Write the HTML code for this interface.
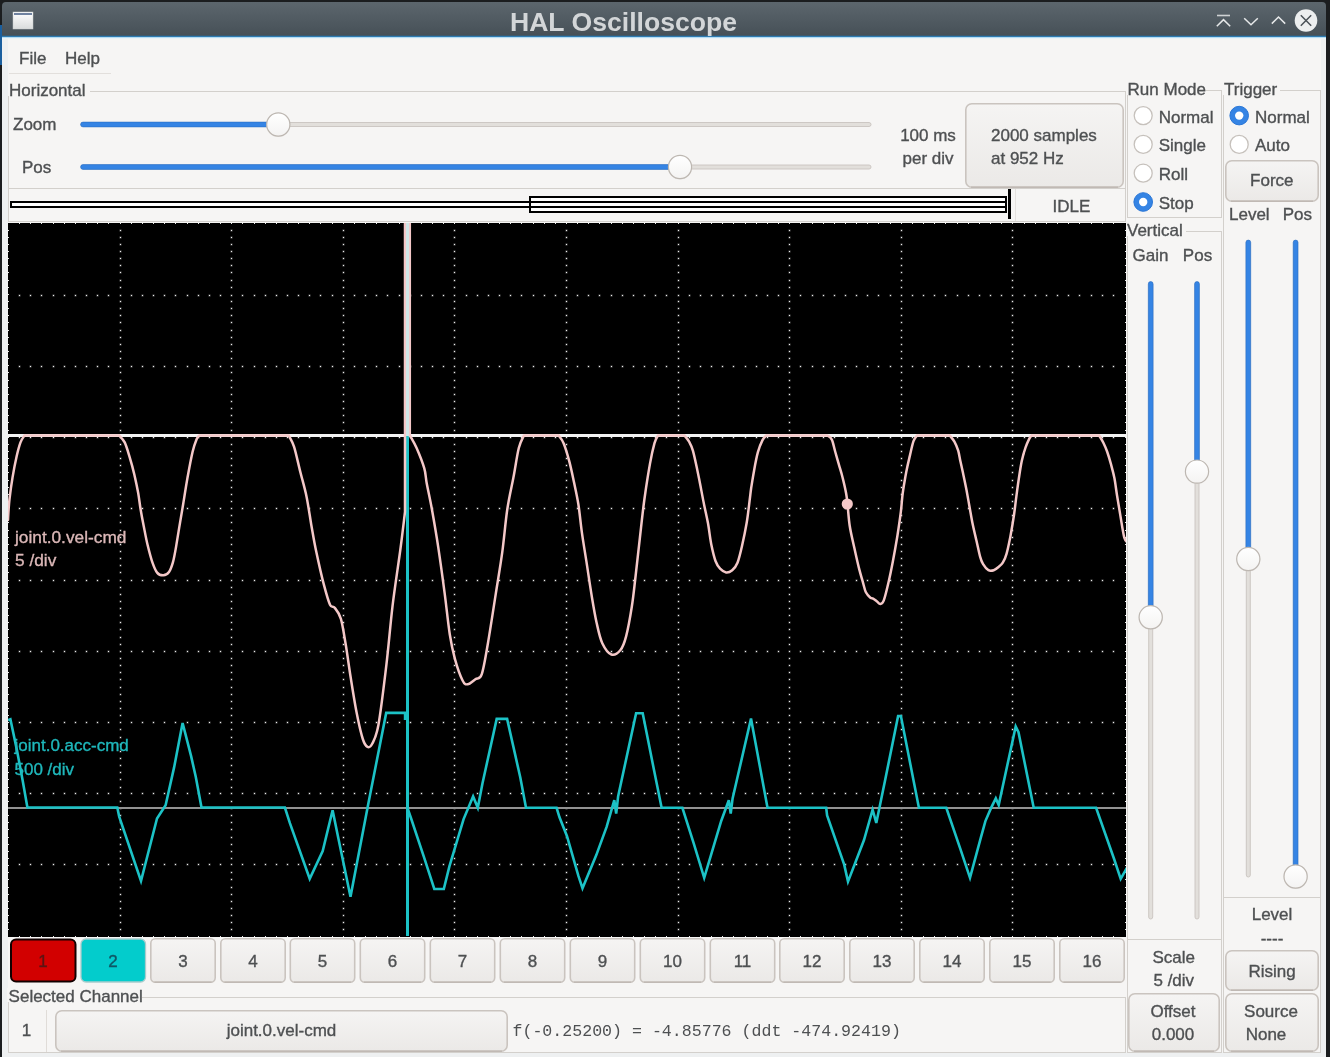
<!DOCTYPE html><html><head><meta charset="utf-8"><style>html,body{margin:0;padding:0;background:#1b1d1f;overflow:hidden}svg{display:block;will-change:transform}</style></head><body>
<svg width="1330" height="1057" viewBox="0 0 1330 1057">
<defs>
<linearGradient id="tb" x1="0" y1="0" x2="0" y2="1"><stop offset="0" stop-color="#5c666d"/><stop offset="1" stop-color="#465057"/></linearGradient>
<linearGradient id="btn" x1="0" y1="0" x2="0" y2="1"><stop offset="0" stop-color="#f5f4f3"/><stop offset="1" stop-color="#ebe9e7"/></linearGradient>
<linearGradient id="thumb" x1="0" y1="0" x2="0" y2="1"><stop offset="0" stop-color="#ffffff"/><stop offset="1" stop-color="#f4f3f2"/></linearGradient>
<linearGradient id="ico" x1="0" y1="0" x2="0" y2="1"><stop offset="0" stop-color="#ffffff"/><stop offset="1" stop-color="#d9dcdc"/></linearGradient>
</defs>
<rect x="0" y="0" width="1330" height="1057" fill="#1b1d1f" />
<rect x="0" y="25" width="2" height="40" fill="#1a5f9f" />
<rect x="2" y="36" width="1324" height="1021" fill="#eef0f1" />
<rect x="8" y="38" width="1313" height="1014" fill="#f6f5f4" />
<path d="M2 36 V6 Q2 2 6 2 H1322 Q1326 2 1326 6 V36 Z" fill="url(#tb)"/>
<rect x="2" y="35" width="1324" height="1" fill="#3d5a6e" />
<rect x="2" y="36" width="1324" height="1" fill="#2f7cb2" />
<rect x="2" y="37" width="1324" height="1" fill="#b5dcf3" />
<rect x="2" y="38" width="1324" height="1" fill="#e9f4f9" />
<rect x="13" y="12" width="20" height="17" fill="url(#ico)" stroke="#c8cccc" stroke-width="0.5"/>
<rect x="14" y="13" width="18" height="2" fill="#6f82a0" />
<text x="623.5" y="30.5" font-size="26.6" fill="#d3d6d8"  text-anchor="middle" font-weight="bold" font-family='"Liberation Sans", sans-serif' >HAL Oscilloscope</text>
<path d="M1217 15.5 H1230" stroke="#cfd2d4" stroke-width="1.6"/>
<path d="M1216.8 26.3 L1223.5 19.6 L1230.2 26.3" stroke="#e6e8e9" stroke-width="1.5" fill="none"/>
<path d="M1244.2 18.2 L1251 24.8 L1257.8 18.2" stroke="#e6e8e9" stroke-width="1.5" fill="none"/>
<path d="M1271.8 23.6 L1278.5 17 L1285.2 23.6" stroke="#e6e8e9" stroke-width="1.5" fill="none"/>
<circle cx="1306" cy="20.5" r="11.3" fill="#eceeef"/>
<path d="M1300.8 15.3 L1311.2 25.7 M1311.2 15.3 L1300.8 25.7" stroke="#4a5157" stroke-width="1.5"/>
<text x="19" y="64" font-size="17" fill="#4e5052" stroke="#4e5052" stroke-width="0.35" text-anchor="start" font-weight="normal" font-family='"Liberation Sans", sans-serif' >File</text>
<text x="65" y="64" font-size="17" fill="#4e5052" stroke="#4e5052" stroke-width="0.35" text-anchor="start" font-weight="normal" font-family='"Liberation Sans", sans-serif' >Help</text>
<rect x="9" y="73" width="102" height="1" fill="#e2dfdc" />
<rect x="8" y="91" width="1118" height="1" fill="#d3d0cc" />
<rect x="8" y="221" width="1118" height="1" fill="#d3d0cc" />
<rect x="8" y="91" width="1" height="131" fill="#d3d0cc" />
<rect x="1125" y="91" width="1" height="131" fill="#d3d0cc" />
<rect x="8" y="82" width="82" height="14" fill="#f6f5f4" />
<text x="9" y="96" font-size="17" fill="#4e5052" stroke="#4e5052" stroke-width="0.35" text-anchor="start" font-weight="normal" font-family='"Liberation Sans", sans-serif' >Horizontal</text>
<text x="13" y="130.3" font-size="17" fill="#4e5052" stroke="#4e5052" stroke-width="0.35" text-anchor="start" font-weight="normal" font-family='"Liberation Sans", sans-serif' >Zoom</text>
<text x="22" y="172.5" font-size="17" fill="#4e5052" stroke="#4e5052" stroke-width="0.35" text-anchor="start" font-weight="normal" font-family='"Liberation Sans", sans-serif' >Pos</text>
<rect x="81" y="122.5" width="790" height="4" rx="2" fill="#e2dfdb" stroke="#c9c4bf" stroke-width="0.9"/>
<rect x="80.6" y="122.1" width="197.3" height="4.8" rx="2.4" fill="#3584e4" stroke="#2a6fc4" stroke-width="0.6"/>
<circle cx="278.3" cy="124.9" r="12" fill="#d8d4d0" opacity="0.5"/>
<circle cx="278.3" cy="124.5" r="11.6" fill="url(#thumb)" stroke="#bdb7b1" stroke-width="1.2"/>
<rect x="81" y="165" width="790" height="4" rx="2" fill="#e2dfdb" stroke="#c9c4bf" stroke-width="0.9"/>
<rect x="80.6" y="164.6" width="599" height="4.8" rx="2.4" fill="#3584e4" stroke="#2a6fc4" stroke-width="0.6"/>
<circle cx="680" cy="167.4" r="12" fill="#d8d4d0" opacity="0.5"/>
<circle cx="680" cy="167" r="11.6" fill="url(#thumb)" stroke="#bdb7b1" stroke-width="1.2"/>
<text x="928" y="141" font-size="17" fill="#4e5052" stroke="#4e5052" stroke-width="0.35" text-anchor="middle" font-weight="normal" font-family='"Liberation Sans", sans-serif' >100 ms</text>
<text x="928" y="164" font-size="17" fill="#4e5052" stroke="#4e5052" stroke-width="0.35" text-anchor="middle" font-weight="normal" font-family='"Liberation Sans", sans-serif' >per div</text>
<rect x="965.8" y="103.8" width="157.4" height="83.4" rx="6" fill="url(#btn)" stroke="#cac4bf" stroke-width="1.6"/>
<path d="M971 187.1 H1118" stroke="#bdb6b0" stroke-width="1.4"/>
<text x="991" y="141" font-size="17" fill="#4e5052" stroke="#4e5052" stroke-width="0.35" text-anchor="start" font-weight="normal" font-family='"Liberation Sans", sans-serif' >2000 samples</text>
<text x="991" y="164" font-size="17" fill="#4e5052" stroke="#4e5052" stroke-width="0.35" text-anchor="start" font-weight="normal" font-family='"Liberation Sans", sans-serif' >at 952 Hz</text>
<rect x="9" y="188" width="1116" height="1" fill="#d3d0cc" />
<rect x="1015" y="189" width="1" height="32" fill="#e4e1de" />
<text x="1071.5" y="211.6" font-size="17" fill="#4e5052" stroke="#4e5052" stroke-width="0.35" text-anchor="middle" font-weight="normal" font-family='"Liberation Sans", sans-serif' >IDLE</text>
<rect x="12" y="203" width="517" height="3" fill="#ffffff" />
<rect x="531" y="198" width="474" height="13" fill="#ffffff" />
<rect x="10" y="201" width="519" height="2" fill="#000000" />
<rect x="10" y="206" width="519" height="2" fill="#000000" />
<rect x="10" y="201" width="2" height="7" fill="#000000" />
<rect x="529" y="196" width="478" height="2" fill="#000000" />
<rect x="529" y="201" width="478" height="2" fill="#000000" />
<rect x="529" y="206" width="478" height="2" fill="#000000" />
<rect x="529" y="211" width="478" height="2" fill="#000000" />
<rect x="529" y="196" width="2" height="17" fill="#000000" />
<rect x="1005" y="196" width="2" height="17" fill="#000000" />
<rect x="1008" y="189" width="3" height="30" fill="#000000" />
<rect x="1127" y="90" width="95" height="1" fill="#d3d0cc" />
<rect x="1127" y="217" width="95" height="1" fill="#d3d0cc" />
<rect x="1127" y="90" width="1" height="128" fill="#d3d0cc" />
<rect x="1221" y="90" width="1" height="128" fill="#d3d0cc" />
<rect x="1126" y="80" width="80" height="15" fill="#f6f5f4" />
<text x="1127.6" y="95.2" font-size="17" fill="#4e5052" stroke="#4e5052" stroke-width="0.35" text-anchor="start" font-weight="normal" font-family='"Liberation Sans", sans-serif' >Run Mode</text>
<circle cx="1143.2" cy="115.6" r="9.0" fill="#ffffff" stroke="#c6c1bc" stroke-width="1.3"/>
<text x="1158.7" y="122.5" font-size="17" fill="#4e5052" stroke="#4e5052" stroke-width="0.35" text-anchor="start" font-weight="normal" font-family='"Liberation Sans", sans-serif' >Normal</text>
<circle cx="1143.2" cy="144.4" r="9.0" fill="#ffffff" stroke="#c6c1bc" stroke-width="1.3"/>
<text x="1158.7" y="151.3" font-size="17" fill="#4e5052" stroke="#4e5052" stroke-width="0.35" text-anchor="start" font-weight="normal" font-family='"Liberation Sans", sans-serif' >Single</text>
<circle cx="1143.2" cy="173.2" r="9.0" fill="#ffffff" stroke="#c6c1bc" stroke-width="1.3"/>
<text x="1158.7" y="180.1" font-size="17" fill="#4e5052" stroke="#4e5052" stroke-width="0.35" text-anchor="start" font-weight="normal" font-family='"Liberation Sans", sans-serif' >Roll</text>
<circle cx="1143.2" cy="202.0" r="9.3" fill="#3584e4" stroke="#2a76d6" stroke-width="1"/>
<circle cx="1143.2" cy="202.0" r="4.2" fill="#ffffff"/>
<text x="1158.7" y="208.9" font-size="17" fill="#4e5052" stroke="#4e5052" stroke-width="0.35" text-anchor="start" font-weight="normal" font-family='"Liberation Sans", sans-serif' >Stop</text>
<rect x="1223" y="90" width="98" height="1" fill="#d3d0cc" />
<rect x="1223" y="1052" width="98" height="1" fill="#d3d0cc" />
<rect x="1223" y="90" width="1" height="963" fill="#d3d0cc" />
<rect x="1320" y="90" width="1" height="963" fill="#d3d0cc" />
<rect x="1222" y="80" width="58" height="15" fill="#f6f5f4" />
<text x="1224" y="95.2" font-size="17" fill="#4e5052" stroke="#4e5052" stroke-width="0.35" text-anchor="start" font-weight="normal" font-family='"Liberation Sans", sans-serif' >Trigger</text>
<circle cx="1239.2" cy="115.6" r="9.3" fill="#3584e4" stroke="#2a76d6" stroke-width="1"/>
<circle cx="1239.2" cy="115.6" r="4.2" fill="#ffffff"/>
<text x="1255" y="122.5" font-size="17" fill="#4e5052" stroke="#4e5052" stroke-width="0.35" text-anchor="start" font-weight="normal" font-family='"Liberation Sans", sans-serif' >Normal</text>
<circle cx="1239.2" cy="144.4" r="9.0" fill="#ffffff" stroke="#c6c1bc" stroke-width="1.3"/>
<text x="1255" y="151.3" font-size="17" fill="#4e5052" stroke="#4e5052" stroke-width="0.35" text-anchor="start" font-weight="normal" font-family='"Liberation Sans", sans-serif' >Auto</text>
<rect x="1225.8" y="160.8" width="92.4" height="40.4" rx="6" fill="url(#btn)" stroke="#cac4bf" stroke-width="1.6"/>
<path d="M1231 201.1 H1313" stroke="#bdb6b0" stroke-width="1.4"/>
<text x="1271.8" y="186.4" font-size="17" fill="#4e5052" stroke="#4e5052" stroke-width="0.35" text-anchor="middle" font-weight="normal" font-family='"Liberation Sans", sans-serif' >Force</text>
<text x="1229" y="219.5" font-size="17" fill="#4e5052" stroke="#4e5052" stroke-width="0.35" text-anchor="start" font-weight="normal" font-family='"Liberation Sans", sans-serif' >Level</text>
<text x="1282.7" y="219.5" font-size="17" fill="#4e5052" stroke="#4e5052" stroke-width="0.35" text-anchor="start" font-weight="normal" font-family='"Liberation Sans", sans-serif' >Pos</text>
<rect x="1246.3" y="240.5" width="4" height="636.5" rx="2" fill="#e2dfdb" stroke="#c9c4bf" stroke-width="0.9"/>
<rect x="1245.8999999999999" y="240.1" width="4.8" height="318.5" rx="2.4" fill="#3584e4" stroke="#2a6fc4" stroke-width="0.6"/>
<circle cx="1248.3" cy="559.4" r="12" fill="#d8d4d0" opacity="0.5"/>
<circle cx="1248.3" cy="559" r="11.6" fill="url(#thumb)" stroke="#bdb7b1" stroke-width="1.2"/>
<rect x="1293.6" y="240.5" width="4" height="636.5" rx="2" fill="#e2dfdb" stroke="#c9c4bf" stroke-width="0.9"/>
<rect x="1293.1999999999998" y="240.1" width="4.8" height="636.0" rx="2.4" fill="#3584e4" stroke="#2a6fc4" stroke-width="0.6"/>
<circle cx="1295.6" cy="876.9" r="12" fill="#d8d4d0" opacity="0.5"/>
<circle cx="1295.6" cy="876.5" r="11.6" fill="url(#thumb)" stroke="#bdb7b1" stroke-width="1.2"/>
<rect x="1224" y="897" width="96" height="1" fill="#d3d0cc" />
<text x="1272" y="920" font-size="17" fill="#4e5052" stroke="#4e5052" stroke-width="0.35" text-anchor="middle" font-weight="normal" font-family='"Liberation Sans", sans-serif' >Level</text>
<text x="1272" y="944" font-size="17" fill="#4e5052" stroke="#4e5052" stroke-width="0.35" text-anchor="middle" font-weight="normal" font-family='"Liberation Sans", sans-serif' >----</text>
<rect x="1225.8" y="950.8" width="92.4" height="39.4" rx="6" fill="url(#btn)" stroke="#cac4bf" stroke-width="1.6"/>
<path d="M1231 990.1 H1313" stroke="#bdb6b0" stroke-width="1.4"/>
<text x="1272" y="976.5" font-size="17" fill="#4e5052" stroke="#4e5052" stroke-width="0.35" text-anchor="middle" font-weight="normal" font-family='"Liberation Sans", sans-serif' >Rising</text>
<rect x="1225.8" y="993.8" width="92.4" height="57.4" rx="6" fill="url(#btn)" stroke="#cac4bf" stroke-width="1.6"/>
<path d="M1231 1051.1 H1313" stroke="#bdb6b0" stroke-width="1.4"/>
<text x="1271" y="1016.5" font-size="17" fill="#4e5052" stroke="#4e5052" stroke-width="0.35" text-anchor="middle" font-weight="normal" font-family='"Liberation Sans", sans-serif' >Source</text>
<text x="1266" y="1039.5" font-size="17" fill="#4e5052" stroke="#4e5052" stroke-width="0.35" text-anchor="middle" font-weight="normal" font-family='"Liberation Sans", sans-serif' >None</text>
<rect x="1127" y="231" width="95" height="1" fill="#d3d0cc" />
<rect x="1127" y="1052" width="95" height="1" fill="#d3d0cc" />
<rect x="1127" y="231" width="1" height="822" fill="#d3d0cc" />
<rect x="1221" y="231" width="1" height="822" fill="#d3d0cc" />
<rect x="1126" y="221" width="60" height="15" fill="#f6f5f4" />
<text x="1127" y="236" font-size="17" fill="#4e5052" stroke="#4e5052" stroke-width="0.35" text-anchor="start" font-weight="normal" font-family='"Liberation Sans", sans-serif' >Vertical</text>
<text x="1150.5" y="261.2" font-size="17" fill="#4e5052" stroke="#4e5052" stroke-width="0.35" text-anchor="middle" font-weight="normal" font-family='"Liberation Sans", sans-serif' >Gain</text>
<text x="1197.5" y="261.2" font-size="17" fill="#4e5052" stroke="#4e5052" stroke-width="0.35" text-anchor="middle" font-weight="normal" font-family='"Liberation Sans", sans-serif' >Pos</text>
<rect x="1148.7" y="282" width="4" height="637" rx="2" fill="#e2dfdb" stroke="#c9c4bf" stroke-width="0.9"/>
<rect x="1148.3" y="281.6" width="4.8" height="335.29999999999995" rx="2.4" fill="#3584e4" stroke="#2a6fc4" stroke-width="0.6"/>
<circle cx="1150.7" cy="617.6999999999999" r="12" fill="#d8d4d0" opacity="0.5"/>
<circle cx="1150.7" cy="617.3" r="11.6" fill="url(#thumb)" stroke="#bdb7b1" stroke-width="1.2"/>
<rect x="1195" y="282" width="4" height="637" rx="2" fill="#e2dfdb" stroke="#c9c4bf" stroke-width="0.9"/>
<rect x="1194.6" y="281.6" width="4.8" height="189.60000000000002" rx="2.4" fill="#3584e4" stroke="#2a6fc4" stroke-width="0.6"/>
<circle cx="1197" cy="472.0" r="12" fill="#d8d4d0" opacity="0.5"/>
<circle cx="1197" cy="471.6" r="11.6" fill="url(#thumb)" stroke="#bdb7b1" stroke-width="1.2"/>
<rect x="1128" y="939" width="93" height="1" fill="#d3d0cc" />
<text x="1173.8" y="962.8" font-size="17" fill="#4e5052" stroke="#4e5052" stroke-width="0.35" text-anchor="middle" font-weight="normal" font-family='"Liberation Sans", sans-serif' >Scale</text>
<text x="1173.8" y="986" font-size="17" fill="#4e5052" stroke="#4e5052" stroke-width="0.35" text-anchor="middle" font-weight="normal" font-family='"Liberation Sans", sans-serif' >5 /div</text>
<rect x="1128.8" y="993.8" width="90.4" height="57.4" rx="6" fill="url(#btn)" stroke="#cac4bf" stroke-width="1.6"/>
<path d="M1134 1051.1 H1214" stroke="#bdb6b0" stroke-width="1.4"/>
<text x="1173" y="1016.5" font-size="17" fill="#4e5052" stroke="#4e5052" stroke-width="0.35" text-anchor="middle" font-weight="normal" font-family='"Liberation Sans", sans-serif' >Offset</text>
<text x="1173" y="1039.5" font-size="17" fill="#4e5052" stroke="#4e5052" stroke-width="0.35" text-anchor="middle" font-weight="normal" font-family='"Liberation Sans", sans-serif' >0.000</text>
<rect x="11.0" y="939.5" width="64.5" height="42" rx="5" fill="#d20000" stroke="#120000" stroke-width="2"/>
<text x="43.0" y="967" font-size="17" fill="#5c1414" stroke="#5c1414" stroke-width="0.35" text-anchor="middle" font-weight="normal" font-family='"Liberation Sans", sans-serif' >1</text>
<rect x="81.0" y="939" width="64.5" height="43" rx="5" fill="#03cccc" stroke="#a8cccc" stroke-width="1.3"/>
<text x="113.0" y="967" font-size="17" fill="#0f5865" stroke="#0f5865" stroke-width="0.35" text-anchor="middle" font-weight="normal" font-family='"Liberation Sans", sans-serif' >2</text>
<rect x="150.8" y="938.8" width="64.4" height="43.4" rx="4.5" fill="url(#btn)" stroke="#cac4bf" stroke-width="1.6"/>
<path d="M154.5 982.1 H211.5" stroke="#bdb6b0" stroke-width="1.4"/>
<text x="183.0" y="967" font-size="17" fill="#4e5052" stroke="#4e5052" stroke-width="0.35" text-anchor="middle" font-weight="normal" font-family='"Liberation Sans", sans-serif' >3</text>
<rect x="220.8" y="938.8" width="64.4" height="43.4" rx="4.5" fill="url(#btn)" stroke="#cac4bf" stroke-width="1.6"/>
<path d="M224.5 982.1 H281.5" stroke="#bdb6b0" stroke-width="1.4"/>
<text x="253.0" y="967" font-size="17" fill="#4e5052" stroke="#4e5052" stroke-width="0.35" text-anchor="middle" font-weight="normal" font-family='"Liberation Sans", sans-serif' >4</text>
<rect x="290.3" y="938.8" width="64.4" height="43.4" rx="4.5" fill="url(#btn)" stroke="#cac4bf" stroke-width="1.6"/>
<path d="M294.0 982.1 H351.0" stroke="#bdb6b0" stroke-width="1.4"/>
<text x="322.5" y="967" font-size="17" fill="#4e5052" stroke="#4e5052" stroke-width="0.35" text-anchor="middle" font-weight="normal" font-family='"Liberation Sans", sans-serif' >5</text>
<rect x="360.3" y="938.8" width="64.4" height="43.4" rx="4.5" fill="url(#btn)" stroke="#cac4bf" stroke-width="1.6"/>
<path d="M364.0 982.1 H421.0" stroke="#bdb6b0" stroke-width="1.4"/>
<text x="392.5" y="967" font-size="17" fill="#4e5052" stroke="#4e5052" stroke-width="0.35" text-anchor="middle" font-weight="normal" font-family='"Liberation Sans", sans-serif' >6</text>
<rect x="430.3" y="938.8" width="64.4" height="43.4" rx="4.5" fill="url(#btn)" stroke="#cac4bf" stroke-width="1.6"/>
<path d="M434.0 982.1 H491.0" stroke="#bdb6b0" stroke-width="1.4"/>
<text x="462.5" y="967" font-size="17" fill="#4e5052" stroke="#4e5052" stroke-width="0.35" text-anchor="middle" font-weight="normal" font-family='"Liberation Sans", sans-serif' >7</text>
<rect x="500.3" y="938.8" width="64.4" height="43.4" rx="4.5" fill="url(#btn)" stroke="#cac4bf" stroke-width="1.6"/>
<path d="M504.0 982.1 H561.0" stroke="#bdb6b0" stroke-width="1.4"/>
<text x="532.5" y="967" font-size="17" fill="#4e5052" stroke="#4e5052" stroke-width="0.35" text-anchor="middle" font-weight="normal" font-family='"Liberation Sans", sans-serif' >8</text>
<rect x="570.3" y="938.8" width="64.4" height="43.4" rx="4.5" fill="url(#btn)" stroke="#cac4bf" stroke-width="1.6"/>
<path d="M574.0 982.1 H631.0" stroke="#bdb6b0" stroke-width="1.4"/>
<text x="602.5" y="967" font-size="17" fill="#4e5052" stroke="#4e5052" stroke-width="0.35" text-anchor="middle" font-weight="normal" font-family='"Liberation Sans", sans-serif' >9</text>
<rect x="640.3" y="938.8" width="64.4" height="43.4" rx="4.5" fill="url(#btn)" stroke="#cac4bf" stroke-width="1.6"/>
<path d="M644.0 982.1 H701.0" stroke="#bdb6b0" stroke-width="1.4"/>
<text x="672.5" y="967" font-size="17" fill="#4e5052" stroke="#4e5052" stroke-width="0.35" text-anchor="middle" font-weight="normal" font-family='"Liberation Sans", sans-serif' >10</text>
<rect x="710.3" y="938.8" width="64.4" height="43.4" rx="4.5" fill="url(#btn)" stroke="#cac4bf" stroke-width="1.6"/>
<path d="M714.0 982.1 H771.0" stroke="#bdb6b0" stroke-width="1.4"/>
<text x="742.5" y="967" font-size="17" fill="#4e5052" stroke="#4e5052" stroke-width="0.35" text-anchor="middle" font-weight="normal" font-family='"Liberation Sans", sans-serif' >11</text>
<rect x="779.8" y="938.8" width="64.4" height="43.4" rx="4.5" fill="url(#btn)" stroke="#cac4bf" stroke-width="1.6"/>
<path d="M783.5 982.1 H840.5" stroke="#bdb6b0" stroke-width="1.4"/>
<text x="812.0" y="967" font-size="17" fill="#4e5052" stroke="#4e5052" stroke-width="0.35" text-anchor="middle" font-weight="normal" font-family='"Liberation Sans", sans-serif' >12</text>
<rect x="849.8" y="938.8" width="64.4" height="43.4" rx="4.5" fill="url(#btn)" stroke="#cac4bf" stroke-width="1.6"/>
<path d="M853.5 982.1 H910.5" stroke="#bdb6b0" stroke-width="1.4"/>
<text x="882.0" y="967" font-size="17" fill="#4e5052" stroke="#4e5052" stroke-width="0.35" text-anchor="middle" font-weight="normal" font-family='"Liberation Sans", sans-serif' >13</text>
<rect x="919.8" y="938.8" width="64.4" height="43.4" rx="4.5" fill="url(#btn)" stroke="#cac4bf" stroke-width="1.6"/>
<path d="M923.5 982.1 H980.5" stroke="#bdb6b0" stroke-width="1.4"/>
<text x="952.0" y="967" font-size="17" fill="#4e5052" stroke="#4e5052" stroke-width="0.35" text-anchor="middle" font-weight="normal" font-family='"Liberation Sans", sans-serif' >14</text>
<rect x="989.8" y="938.8" width="64.4" height="43.4" rx="4.5" fill="url(#btn)" stroke="#cac4bf" stroke-width="1.6"/>
<path d="M993.5 982.1 H1050.5" stroke="#bdb6b0" stroke-width="1.4"/>
<text x="1022.0" y="967" font-size="17" fill="#4e5052" stroke="#4e5052" stroke-width="0.35" text-anchor="middle" font-weight="normal" font-family='"Liberation Sans", sans-serif' >15</text>
<rect x="1059.8" y="938.8" width="64.4" height="43.4" rx="4.5" fill="url(#btn)" stroke="#cac4bf" stroke-width="1.6"/>
<path d="M1063.5 982.1 H1120.5" stroke="#bdb6b0" stroke-width="1.4"/>
<text x="1092.0" y="967" font-size="17" fill="#4e5052" stroke="#4e5052" stroke-width="0.35" text-anchor="middle" font-weight="normal" font-family='"Liberation Sans", sans-serif' >16</text>
<rect x="8" y="997" width="1118" height="1" fill="#d3d0cc" />
<rect x="8" y="1052" width="1118" height="1" fill="#d3d0cc" />
<rect x="8" y="997" width="1" height="56" fill="#d3d0cc" />
<rect x="1125" y="997" width="1" height="56" fill="#d3d0cc" />
<rect x="7" y="988" width="135" height="14" fill="#f6f5f4" />
<text x="8.6" y="1002.3" font-size="17" fill="#4e5052" stroke="#4e5052" stroke-width="0.35" text-anchor="start" font-weight="normal" font-family='"Liberation Sans", sans-serif' >Selected Channel</text>
<text x="26.6" y="1036" font-size="17" fill="#4e5052" stroke="#4e5052" stroke-width="0.35" text-anchor="middle" font-weight="normal" font-family='"Liberation Sans", sans-serif' >1</text>
<rect x="46" y="1010" width="1" height="42" fill="#e0dcd8" />
<rect x="55.8" y="1010.8" width="451.4" height="40.4" rx="6" fill="url(#btn)" stroke="#cac4bf" stroke-width="1.6"/>
<path d="M61 1051.1 H502" stroke="#bdb6b0" stroke-width="1.4"/>
<text x="281.5" y="1036" font-size="17" fill="#4e5052" stroke="#4e5052" stroke-width="0.35" text-anchor="middle" font-weight="normal" font-family='"Liberation Sans", sans-serif' >joint.0.vel-cmd</text>
<text x="512.5" y="1036" font-size="16.6" fill="#4e5052"  text-anchor="start" font-weight="normal" font-family='"Liberation Mono", monospace' >f(-0.25200) = -4.85776 (ddt -474.92419)</text>
<rect x="8" y="223" width="1118" height="714" fill="#000000" />
<path d="M18.5 294.5h2v2h-2zM29.5 294.5h2v2h-2zM40.5 294.5h2v2h-2zM52.5 294.5h2v2h-2zM63.5 294.5h2v2h-2zM74.5 294.5h2v2h-2zM85.5 294.5h2v2h-2zM96.5 294.5h2v2h-2zM107.5 294.5h2v2h-2zM119.5 294.5h2v2h-2zM130.5 294.5h2v2h-2zM141.5 294.5h2v2h-2zM152.5 294.5h2v2h-2zM163.5 294.5h2v2h-2zM174.5 294.5h2v2h-2zM186.5 294.5h2v2h-2zM197.5 294.5h2v2h-2zM208.5 294.5h2v2h-2zM219.5 294.5h2v2h-2zM230.5 294.5h2v2h-2zM241.5 294.5h2v2h-2zM253.5 294.5h2v2h-2zM264.5 294.5h2v2h-2zM275.5 294.5h2v2h-2zM286.5 294.5h2v2h-2zM297.5 294.5h2v2h-2zM308.5 294.5h2v2h-2zM319.5 294.5h2v2h-2zM331.5 294.5h2v2h-2zM342.5 294.5h2v2h-2zM353.5 294.5h2v2h-2zM364.5 294.5h2v2h-2zM375.5 294.5h2v2h-2zM386.5 294.5h2v2h-2zM398.5 294.5h2v2h-2zM409.5 294.5h2v2h-2zM420.5 294.5h2v2h-2zM431.5 294.5h2v2h-2zM442.5 294.5h2v2h-2zM453.5 294.5h2v2h-2zM465.5 294.5h2v2h-2zM476.5 294.5h2v2h-2zM487.5 294.5h2v2h-2zM498.5 294.5h2v2h-2zM509.5 294.5h2v2h-2zM520.5 294.5h2v2h-2zM532.5 294.5h2v2h-2zM543.5 294.5h2v2h-2zM554.5 294.5h2v2h-2zM565.5 294.5h2v2h-2zM576.5 294.5h2v2h-2zM587.5 294.5h2v2h-2zM598.5 294.5h2v2h-2zM610.5 294.5h2v2h-2zM621.5 294.5h2v2h-2zM632.5 294.5h2v2h-2zM643.5 294.5h2v2h-2zM654.5 294.5h2v2h-2zM665.5 294.5h2v2h-2zM677.5 294.5h2v2h-2zM688.5 294.5h2v2h-2zM699.5 294.5h2v2h-2zM710.5 294.5h2v2h-2zM721.5 294.5h2v2h-2zM732.5 294.5h2v2h-2zM744.5 294.5h2v2h-2zM755.5 294.5h2v2h-2zM766.5 294.5h2v2h-2zM777.5 294.5h2v2h-2zM788.5 294.5h2v2h-2zM799.5 294.5h2v2h-2zM811.5 294.5h2v2h-2zM822.5 294.5h2v2h-2zM833.5 294.5h2v2h-2zM844.5 294.5h2v2h-2zM855.5 294.5h2v2h-2zM866.5 294.5h2v2h-2zM877.5 294.5h2v2h-2zM889.5 294.5h2v2h-2zM900.5 294.5h2v2h-2zM911.5 294.5h2v2h-2zM922.5 294.5h2v2h-2zM933.5 294.5h2v2h-2zM944.5 294.5h2v2h-2zM956.5 294.5h2v2h-2zM967.5 294.5h2v2h-2zM978.5 294.5h2v2h-2zM989.5 294.5h2v2h-2zM1000.5 294.5h2v2h-2zM1011.5 294.5h2v2h-2zM1023.5 294.5h2v2h-2zM1034.5 294.5h2v2h-2zM1045.5 294.5h2v2h-2zM1056.5 294.5h2v2h-2zM1067.5 294.5h2v2h-2zM1078.5 294.5h2v2h-2zM1090.5 294.5h2v2h-2zM1101.5 294.5h2v2h-2zM1112.5 294.5h2v2h-2zM18.5 365.5h2v2h-2zM29.5 365.5h2v2h-2zM40.5 365.5h2v2h-2zM52.5 365.5h2v2h-2zM63.5 365.5h2v2h-2zM74.5 365.5h2v2h-2zM85.5 365.5h2v2h-2zM96.5 365.5h2v2h-2zM107.5 365.5h2v2h-2zM119.5 365.5h2v2h-2zM130.5 365.5h2v2h-2zM141.5 365.5h2v2h-2zM152.5 365.5h2v2h-2zM163.5 365.5h2v2h-2zM174.5 365.5h2v2h-2zM186.5 365.5h2v2h-2zM197.5 365.5h2v2h-2zM208.5 365.5h2v2h-2zM219.5 365.5h2v2h-2zM230.5 365.5h2v2h-2zM241.5 365.5h2v2h-2zM253.5 365.5h2v2h-2zM264.5 365.5h2v2h-2zM275.5 365.5h2v2h-2zM286.5 365.5h2v2h-2zM297.5 365.5h2v2h-2zM308.5 365.5h2v2h-2zM319.5 365.5h2v2h-2zM331.5 365.5h2v2h-2zM342.5 365.5h2v2h-2zM353.5 365.5h2v2h-2zM364.5 365.5h2v2h-2zM375.5 365.5h2v2h-2zM386.5 365.5h2v2h-2zM398.5 365.5h2v2h-2zM409.5 365.5h2v2h-2zM420.5 365.5h2v2h-2zM431.5 365.5h2v2h-2zM442.5 365.5h2v2h-2zM453.5 365.5h2v2h-2zM465.5 365.5h2v2h-2zM476.5 365.5h2v2h-2zM487.5 365.5h2v2h-2zM498.5 365.5h2v2h-2zM509.5 365.5h2v2h-2zM520.5 365.5h2v2h-2zM532.5 365.5h2v2h-2zM543.5 365.5h2v2h-2zM554.5 365.5h2v2h-2zM565.5 365.5h2v2h-2zM576.5 365.5h2v2h-2zM587.5 365.5h2v2h-2zM598.5 365.5h2v2h-2zM610.5 365.5h2v2h-2zM621.5 365.5h2v2h-2zM632.5 365.5h2v2h-2zM643.5 365.5h2v2h-2zM654.5 365.5h2v2h-2zM665.5 365.5h2v2h-2zM677.5 365.5h2v2h-2zM688.5 365.5h2v2h-2zM699.5 365.5h2v2h-2zM710.5 365.5h2v2h-2zM721.5 365.5h2v2h-2zM732.5 365.5h2v2h-2zM744.5 365.5h2v2h-2zM755.5 365.5h2v2h-2zM766.5 365.5h2v2h-2zM777.5 365.5h2v2h-2zM788.5 365.5h2v2h-2zM799.5 365.5h2v2h-2zM811.5 365.5h2v2h-2zM822.5 365.5h2v2h-2zM833.5 365.5h2v2h-2zM844.5 365.5h2v2h-2zM855.5 365.5h2v2h-2zM866.5 365.5h2v2h-2zM877.5 365.5h2v2h-2zM889.5 365.5h2v2h-2zM900.5 365.5h2v2h-2zM911.5 365.5h2v2h-2zM922.5 365.5h2v2h-2zM933.5 365.5h2v2h-2zM944.5 365.5h2v2h-2zM956.5 365.5h2v2h-2zM967.5 365.5h2v2h-2zM978.5 365.5h2v2h-2zM989.5 365.5h2v2h-2zM1000.5 365.5h2v2h-2zM1011.5 365.5h2v2h-2zM1023.5 365.5h2v2h-2zM1034.5 365.5h2v2h-2zM1045.5 365.5h2v2h-2zM1056.5 365.5h2v2h-2zM1067.5 365.5h2v2h-2zM1078.5 365.5h2v2h-2zM1090.5 365.5h2v2h-2zM1101.5 365.5h2v2h-2zM1112.5 365.5h2v2h-2zM18.5 436.5h2v2h-2zM29.5 436.5h2v2h-2zM40.5 436.5h2v2h-2zM52.5 436.5h2v2h-2zM63.5 436.5h2v2h-2zM74.5 436.5h2v2h-2zM85.5 436.5h2v2h-2zM96.5 436.5h2v2h-2zM107.5 436.5h2v2h-2zM119.5 436.5h2v2h-2zM130.5 436.5h2v2h-2zM141.5 436.5h2v2h-2zM152.5 436.5h2v2h-2zM163.5 436.5h2v2h-2zM174.5 436.5h2v2h-2zM186.5 436.5h2v2h-2zM197.5 436.5h2v2h-2zM208.5 436.5h2v2h-2zM219.5 436.5h2v2h-2zM230.5 436.5h2v2h-2zM241.5 436.5h2v2h-2zM253.5 436.5h2v2h-2zM264.5 436.5h2v2h-2zM275.5 436.5h2v2h-2zM286.5 436.5h2v2h-2zM297.5 436.5h2v2h-2zM308.5 436.5h2v2h-2zM319.5 436.5h2v2h-2zM331.5 436.5h2v2h-2zM342.5 436.5h2v2h-2zM353.5 436.5h2v2h-2zM364.5 436.5h2v2h-2zM375.5 436.5h2v2h-2zM386.5 436.5h2v2h-2zM398.5 436.5h2v2h-2zM409.5 436.5h2v2h-2zM420.5 436.5h2v2h-2zM431.5 436.5h2v2h-2zM442.5 436.5h2v2h-2zM453.5 436.5h2v2h-2zM465.5 436.5h2v2h-2zM476.5 436.5h2v2h-2zM487.5 436.5h2v2h-2zM498.5 436.5h2v2h-2zM509.5 436.5h2v2h-2zM520.5 436.5h2v2h-2zM532.5 436.5h2v2h-2zM543.5 436.5h2v2h-2zM554.5 436.5h2v2h-2zM565.5 436.5h2v2h-2zM576.5 436.5h2v2h-2zM587.5 436.5h2v2h-2zM598.5 436.5h2v2h-2zM610.5 436.5h2v2h-2zM621.5 436.5h2v2h-2zM632.5 436.5h2v2h-2zM643.5 436.5h2v2h-2zM654.5 436.5h2v2h-2zM665.5 436.5h2v2h-2zM677.5 436.5h2v2h-2zM688.5 436.5h2v2h-2zM699.5 436.5h2v2h-2zM710.5 436.5h2v2h-2zM721.5 436.5h2v2h-2zM732.5 436.5h2v2h-2zM744.5 436.5h2v2h-2zM755.5 436.5h2v2h-2zM766.5 436.5h2v2h-2zM777.5 436.5h2v2h-2zM788.5 436.5h2v2h-2zM799.5 436.5h2v2h-2zM811.5 436.5h2v2h-2zM822.5 436.5h2v2h-2zM833.5 436.5h2v2h-2zM844.5 436.5h2v2h-2zM855.5 436.5h2v2h-2zM866.5 436.5h2v2h-2zM877.5 436.5h2v2h-2zM889.5 436.5h2v2h-2zM900.5 436.5h2v2h-2zM911.5 436.5h2v2h-2zM922.5 436.5h2v2h-2zM933.5 436.5h2v2h-2zM944.5 436.5h2v2h-2zM956.5 436.5h2v2h-2zM967.5 436.5h2v2h-2zM978.5 436.5h2v2h-2zM989.5 436.5h2v2h-2zM1000.5 436.5h2v2h-2zM1011.5 436.5h2v2h-2zM1023.5 436.5h2v2h-2zM1034.5 436.5h2v2h-2zM1045.5 436.5h2v2h-2zM1056.5 436.5h2v2h-2zM1067.5 436.5h2v2h-2zM1078.5 436.5h2v2h-2zM1090.5 436.5h2v2h-2zM1101.5 436.5h2v2h-2zM1112.5 436.5h2v2h-2zM18.5 507.5h2v2h-2zM29.5 507.5h2v2h-2zM40.5 507.5h2v2h-2zM52.5 507.5h2v2h-2zM63.5 507.5h2v2h-2zM74.5 507.5h2v2h-2zM85.5 507.5h2v2h-2zM96.5 507.5h2v2h-2zM107.5 507.5h2v2h-2zM119.5 507.5h2v2h-2zM130.5 507.5h2v2h-2zM141.5 507.5h2v2h-2zM152.5 507.5h2v2h-2zM163.5 507.5h2v2h-2zM174.5 507.5h2v2h-2zM186.5 507.5h2v2h-2zM197.5 507.5h2v2h-2zM208.5 507.5h2v2h-2zM219.5 507.5h2v2h-2zM230.5 507.5h2v2h-2zM241.5 507.5h2v2h-2zM253.5 507.5h2v2h-2zM264.5 507.5h2v2h-2zM275.5 507.5h2v2h-2zM286.5 507.5h2v2h-2zM297.5 507.5h2v2h-2zM308.5 507.5h2v2h-2zM319.5 507.5h2v2h-2zM331.5 507.5h2v2h-2zM342.5 507.5h2v2h-2zM353.5 507.5h2v2h-2zM364.5 507.5h2v2h-2zM375.5 507.5h2v2h-2zM386.5 507.5h2v2h-2zM398.5 507.5h2v2h-2zM409.5 507.5h2v2h-2zM420.5 507.5h2v2h-2zM431.5 507.5h2v2h-2zM442.5 507.5h2v2h-2zM453.5 507.5h2v2h-2zM465.5 507.5h2v2h-2zM476.5 507.5h2v2h-2zM487.5 507.5h2v2h-2zM498.5 507.5h2v2h-2zM509.5 507.5h2v2h-2zM520.5 507.5h2v2h-2zM532.5 507.5h2v2h-2zM543.5 507.5h2v2h-2zM554.5 507.5h2v2h-2zM565.5 507.5h2v2h-2zM576.5 507.5h2v2h-2zM587.5 507.5h2v2h-2zM598.5 507.5h2v2h-2zM610.5 507.5h2v2h-2zM621.5 507.5h2v2h-2zM632.5 507.5h2v2h-2zM643.5 507.5h2v2h-2zM654.5 507.5h2v2h-2zM665.5 507.5h2v2h-2zM677.5 507.5h2v2h-2zM688.5 507.5h2v2h-2zM699.5 507.5h2v2h-2zM710.5 507.5h2v2h-2zM721.5 507.5h2v2h-2zM732.5 507.5h2v2h-2zM744.5 507.5h2v2h-2zM755.5 507.5h2v2h-2zM766.5 507.5h2v2h-2zM777.5 507.5h2v2h-2zM788.5 507.5h2v2h-2zM799.5 507.5h2v2h-2zM811.5 507.5h2v2h-2zM822.5 507.5h2v2h-2zM833.5 507.5h2v2h-2zM844.5 507.5h2v2h-2zM855.5 507.5h2v2h-2zM866.5 507.5h2v2h-2zM877.5 507.5h2v2h-2zM889.5 507.5h2v2h-2zM900.5 507.5h2v2h-2zM911.5 507.5h2v2h-2zM922.5 507.5h2v2h-2zM933.5 507.5h2v2h-2zM944.5 507.5h2v2h-2zM956.5 507.5h2v2h-2zM967.5 507.5h2v2h-2zM978.5 507.5h2v2h-2zM989.5 507.5h2v2h-2zM1000.5 507.5h2v2h-2zM1011.5 507.5h2v2h-2zM1023.5 507.5h2v2h-2zM1034.5 507.5h2v2h-2zM1045.5 507.5h2v2h-2zM1056.5 507.5h2v2h-2zM1067.5 507.5h2v2h-2zM1078.5 507.5h2v2h-2zM1090.5 507.5h2v2h-2zM1101.5 507.5h2v2h-2zM1112.5 507.5h2v2h-2zM18.5 579.5h2v2h-2zM29.5 579.5h2v2h-2zM40.5 579.5h2v2h-2zM52.5 579.5h2v2h-2zM63.5 579.5h2v2h-2zM74.5 579.5h2v2h-2zM85.5 579.5h2v2h-2zM96.5 579.5h2v2h-2zM107.5 579.5h2v2h-2zM119.5 579.5h2v2h-2zM130.5 579.5h2v2h-2zM141.5 579.5h2v2h-2zM152.5 579.5h2v2h-2zM163.5 579.5h2v2h-2zM174.5 579.5h2v2h-2zM186.5 579.5h2v2h-2zM197.5 579.5h2v2h-2zM208.5 579.5h2v2h-2zM219.5 579.5h2v2h-2zM230.5 579.5h2v2h-2zM241.5 579.5h2v2h-2zM253.5 579.5h2v2h-2zM264.5 579.5h2v2h-2zM275.5 579.5h2v2h-2zM286.5 579.5h2v2h-2zM297.5 579.5h2v2h-2zM308.5 579.5h2v2h-2zM319.5 579.5h2v2h-2zM331.5 579.5h2v2h-2zM342.5 579.5h2v2h-2zM353.5 579.5h2v2h-2zM364.5 579.5h2v2h-2zM375.5 579.5h2v2h-2zM386.5 579.5h2v2h-2zM398.5 579.5h2v2h-2zM409.5 579.5h2v2h-2zM420.5 579.5h2v2h-2zM431.5 579.5h2v2h-2zM442.5 579.5h2v2h-2zM453.5 579.5h2v2h-2zM465.5 579.5h2v2h-2zM476.5 579.5h2v2h-2zM487.5 579.5h2v2h-2zM498.5 579.5h2v2h-2zM509.5 579.5h2v2h-2zM520.5 579.5h2v2h-2zM532.5 579.5h2v2h-2zM543.5 579.5h2v2h-2zM554.5 579.5h2v2h-2zM565.5 579.5h2v2h-2zM576.5 579.5h2v2h-2zM587.5 579.5h2v2h-2zM598.5 579.5h2v2h-2zM610.5 579.5h2v2h-2zM621.5 579.5h2v2h-2zM632.5 579.5h2v2h-2zM643.5 579.5h2v2h-2zM654.5 579.5h2v2h-2zM665.5 579.5h2v2h-2zM677.5 579.5h2v2h-2zM688.5 579.5h2v2h-2zM699.5 579.5h2v2h-2zM710.5 579.5h2v2h-2zM721.5 579.5h2v2h-2zM732.5 579.5h2v2h-2zM744.5 579.5h2v2h-2zM755.5 579.5h2v2h-2zM766.5 579.5h2v2h-2zM777.5 579.5h2v2h-2zM788.5 579.5h2v2h-2zM799.5 579.5h2v2h-2zM811.5 579.5h2v2h-2zM822.5 579.5h2v2h-2zM833.5 579.5h2v2h-2zM844.5 579.5h2v2h-2zM855.5 579.5h2v2h-2zM866.5 579.5h2v2h-2zM877.5 579.5h2v2h-2zM889.5 579.5h2v2h-2zM900.5 579.5h2v2h-2zM911.5 579.5h2v2h-2zM922.5 579.5h2v2h-2zM933.5 579.5h2v2h-2zM944.5 579.5h2v2h-2zM956.5 579.5h2v2h-2zM967.5 579.5h2v2h-2zM978.5 579.5h2v2h-2zM989.5 579.5h2v2h-2zM1000.5 579.5h2v2h-2zM1011.5 579.5h2v2h-2zM1023.5 579.5h2v2h-2zM1034.5 579.5h2v2h-2zM1045.5 579.5h2v2h-2zM1056.5 579.5h2v2h-2zM1067.5 579.5h2v2h-2zM1078.5 579.5h2v2h-2zM1090.5 579.5h2v2h-2zM1101.5 579.5h2v2h-2zM1112.5 579.5h2v2h-2zM18.5 650.5h2v2h-2zM29.5 650.5h2v2h-2zM40.5 650.5h2v2h-2zM52.5 650.5h2v2h-2zM63.5 650.5h2v2h-2zM74.5 650.5h2v2h-2zM85.5 650.5h2v2h-2zM96.5 650.5h2v2h-2zM107.5 650.5h2v2h-2zM119.5 650.5h2v2h-2zM130.5 650.5h2v2h-2zM141.5 650.5h2v2h-2zM152.5 650.5h2v2h-2zM163.5 650.5h2v2h-2zM174.5 650.5h2v2h-2zM186.5 650.5h2v2h-2zM197.5 650.5h2v2h-2zM208.5 650.5h2v2h-2zM219.5 650.5h2v2h-2zM230.5 650.5h2v2h-2zM241.5 650.5h2v2h-2zM253.5 650.5h2v2h-2zM264.5 650.5h2v2h-2zM275.5 650.5h2v2h-2zM286.5 650.5h2v2h-2zM297.5 650.5h2v2h-2zM308.5 650.5h2v2h-2zM319.5 650.5h2v2h-2zM331.5 650.5h2v2h-2zM342.5 650.5h2v2h-2zM353.5 650.5h2v2h-2zM364.5 650.5h2v2h-2zM375.5 650.5h2v2h-2zM386.5 650.5h2v2h-2zM398.5 650.5h2v2h-2zM409.5 650.5h2v2h-2zM420.5 650.5h2v2h-2zM431.5 650.5h2v2h-2zM442.5 650.5h2v2h-2zM453.5 650.5h2v2h-2zM465.5 650.5h2v2h-2zM476.5 650.5h2v2h-2zM487.5 650.5h2v2h-2zM498.5 650.5h2v2h-2zM509.5 650.5h2v2h-2zM520.5 650.5h2v2h-2zM532.5 650.5h2v2h-2zM543.5 650.5h2v2h-2zM554.5 650.5h2v2h-2zM565.5 650.5h2v2h-2zM576.5 650.5h2v2h-2zM587.5 650.5h2v2h-2zM598.5 650.5h2v2h-2zM610.5 650.5h2v2h-2zM621.5 650.5h2v2h-2zM632.5 650.5h2v2h-2zM643.5 650.5h2v2h-2zM654.5 650.5h2v2h-2zM665.5 650.5h2v2h-2zM677.5 650.5h2v2h-2zM688.5 650.5h2v2h-2zM699.5 650.5h2v2h-2zM710.5 650.5h2v2h-2zM721.5 650.5h2v2h-2zM732.5 650.5h2v2h-2zM744.5 650.5h2v2h-2zM755.5 650.5h2v2h-2zM766.5 650.5h2v2h-2zM777.5 650.5h2v2h-2zM788.5 650.5h2v2h-2zM799.5 650.5h2v2h-2zM811.5 650.5h2v2h-2zM822.5 650.5h2v2h-2zM833.5 650.5h2v2h-2zM844.5 650.5h2v2h-2zM855.5 650.5h2v2h-2zM866.5 650.5h2v2h-2zM877.5 650.5h2v2h-2zM889.5 650.5h2v2h-2zM900.5 650.5h2v2h-2zM911.5 650.5h2v2h-2zM922.5 650.5h2v2h-2zM933.5 650.5h2v2h-2zM944.5 650.5h2v2h-2zM956.5 650.5h2v2h-2zM967.5 650.5h2v2h-2zM978.5 650.5h2v2h-2zM989.5 650.5h2v2h-2zM1000.5 650.5h2v2h-2zM1011.5 650.5h2v2h-2zM1023.5 650.5h2v2h-2zM1034.5 650.5h2v2h-2zM1045.5 650.5h2v2h-2zM1056.5 650.5h2v2h-2zM1067.5 650.5h2v2h-2zM1078.5 650.5h2v2h-2zM1090.5 650.5h2v2h-2zM1101.5 650.5h2v2h-2zM1112.5 650.5h2v2h-2zM18.5 721.5h2v2h-2zM29.5 721.5h2v2h-2zM40.5 721.5h2v2h-2zM52.5 721.5h2v2h-2zM63.5 721.5h2v2h-2zM74.5 721.5h2v2h-2zM85.5 721.5h2v2h-2zM96.5 721.5h2v2h-2zM107.5 721.5h2v2h-2zM119.5 721.5h2v2h-2zM130.5 721.5h2v2h-2zM141.5 721.5h2v2h-2zM152.5 721.5h2v2h-2zM163.5 721.5h2v2h-2zM174.5 721.5h2v2h-2zM186.5 721.5h2v2h-2zM197.5 721.5h2v2h-2zM208.5 721.5h2v2h-2zM219.5 721.5h2v2h-2zM230.5 721.5h2v2h-2zM241.5 721.5h2v2h-2zM253.5 721.5h2v2h-2zM264.5 721.5h2v2h-2zM275.5 721.5h2v2h-2zM286.5 721.5h2v2h-2zM297.5 721.5h2v2h-2zM308.5 721.5h2v2h-2zM319.5 721.5h2v2h-2zM331.5 721.5h2v2h-2zM342.5 721.5h2v2h-2zM353.5 721.5h2v2h-2zM364.5 721.5h2v2h-2zM375.5 721.5h2v2h-2zM386.5 721.5h2v2h-2zM398.5 721.5h2v2h-2zM409.5 721.5h2v2h-2zM420.5 721.5h2v2h-2zM431.5 721.5h2v2h-2zM442.5 721.5h2v2h-2zM453.5 721.5h2v2h-2zM465.5 721.5h2v2h-2zM476.5 721.5h2v2h-2zM487.5 721.5h2v2h-2zM498.5 721.5h2v2h-2zM509.5 721.5h2v2h-2zM520.5 721.5h2v2h-2zM532.5 721.5h2v2h-2zM543.5 721.5h2v2h-2zM554.5 721.5h2v2h-2zM565.5 721.5h2v2h-2zM576.5 721.5h2v2h-2zM587.5 721.5h2v2h-2zM598.5 721.5h2v2h-2zM610.5 721.5h2v2h-2zM621.5 721.5h2v2h-2zM632.5 721.5h2v2h-2zM643.5 721.5h2v2h-2zM654.5 721.5h2v2h-2zM665.5 721.5h2v2h-2zM677.5 721.5h2v2h-2zM688.5 721.5h2v2h-2zM699.5 721.5h2v2h-2zM710.5 721.5h2v2h-2zM721.5 721.5h2v2h-2zM732.5 721.5h2v2h-2zM744.5 721.5h2v2h-2zM755.5 721.5h2v2h-2zM766.5 721.5h2v2h-2zM777.5 721.5h2v2h-2zM788.5 721.5h2v2h-2zM799.5 721.5h2v2h-2zM811.5 721.5h2v2h-2zM822.5 721.5h2v2h-2zM833.5 721.5h2v2h-2zM844.5 721.5h2v2h-2zM855.5 721.5h2v2h-2zM866.5 721.5h2v2h-2zM877.5 721.5h2v2h-2zM889.5 721.5h2v2h-2zM900.5 721.5h2v2h-2zM911.5 721.5h2v2h-2zM922.5 721.5h2v2h-2zM933.5 721.5h2v2h-2zM944.5 721.5h2v2h-2zM956.5 721.5h2v2h-2zM967.5 721.5h2v2h-2zM978.5 721.5h2v2h-2zM989.5 721.5h2v2h-2zM1000.5 721.5h2v2h-2zM1011.5 721.5h2v2h-2zM1023.5 721.5h2v2h-2zM1034.5 721.5h2v2h-2zM1045.5 721.5h2v2h-2zM1056.5 721.5h2v2h-2zM1067.5 721.5h2v2h-2zM1078.5 721.5h2v2h-2zM1090.5 721.5h2v2h-2zM1101.5 721.5h2v2h-2zM1112.5 721.5h2v2h-2zM18.5 792.5h2v2h-2zM29.5 792.5h2v2h-2zM40.5 792.5h2v2h-2zM52.5 792.5h2v2h-2zM63.5 792.5h2v2h-2zM74.5 792.5h2v2h-2zM85.5 792.5h2v2h-2zM96.5 792.5h2v2h-2zM107.5 792.5h2v2h-2zM119.5 792.5h2v2h-2zM130.5 792.5h2v2h-2zM141.5 792.5h2v2h-2zM152.5 792.5h2v2h-2zM163.5 792.5h2v2h-2zM174.5 792.5h2v2h-2zM186.5 792.5h2v2h-2zM197.5 792.5h2v2h-2zM208.5 792.5h2v2h-2zM219.5 792.5h2v2h-2zM230.5 792.5h2v2h-2zM241.5 792.5h2v2h-2zM253.5 792.5h2v2h-2zM264.5 792.5h2v2h-2zM275.5 792.5h2v2h-2zM286.5 792.5h2v2h-2zM297.5 792.5h2v2h-2zM308.5 792.5h2v2h-2zM319.5 792.5h2v2h-2zM331.5 792.5h2v2h-2zM342.5 792.5h2v2h-2zM353.5 792.5h2v2h-2zM364.5 792.5h2v2h-2zM375.5 792.5h2v2h-2zM386.5 792.5h2v2h-2zM398.5 792.5h2v2h-2zM409.5 792.5h2v2h-2zM420.5 792.5h2v2h-2zM431.5 792.5h2v2h-2zM442.5 792.5h2v2h-2zM453.5 792.5h2v2h-2zM465.5 792.5h2v2h-2zM476.5 792.5h2v2h-2zM487.5 792.5h2v2h-2zM498.5 792.5h2v2h-2zM509.5 792.5h2v2h-2zM520.5 792.5h2v2h-2zM532.5 792.5h2v2h-2zM543.5 792.5h2v2h-2zM554.5 792.5h2v2h-2zM565.5 792.5h2v2h-2zM576.5 792.5h2v2h-2zM587.5 792.5h2v2h-2zM598.5 792.5h2v2h-2zM610.5 792.5h2v2h-2zM621.5 792.5h2v2h-2zM632.5 792.5h2v2h-2zM643.5 792.5h2v2h-2zM654.5 792.5h2v2h-2zM665.5 792.5h2v2h-2zM677.5 792.5h2v2h-2zM688.5 792.5h2v2h-2zM699.5 792.5h2v2h-2zM710.5 792.5h2v2h-2zM721.5 792.5h2v2h-2zM732.5 792.5h2v2h-2zM744.5 792.5h2v2h-2zM755.5 792.5h2v2h-2zM766.5 792.5h2v2h-2zM777.5 792.5h2v2h-2zM788.5 792.5h2v2h-2zM799.5 792.5h2v2h-2zM811.5 792.5h2v2h-2zM822.5 792.5h2v2h-2zM833.5 792.5h2v2h-2zM844.5 792.5h2v2h-2zM855.5 792.5h2v2h-2zM866.5 792.5h2v2h-2zM877.5 792.5h2v2h-2zM889.5 792.5h2v2h-2zM900.5 792.5h2v2h-2zM911.5 792.5h2v2h-2zM922.5 792.5h2v2h-2zM933.5 792.5h2v2h-2zM944.5 792.5h2v2h-2zM956.5 792.5h2v2h-2zM967.5 792.5h2v2h-2zM978.5 792.5h2v2h-2zM989.5 792.5h2v2h-2zM1000.5 792.5h2v2h-2zM1011.5 792.5h2v2h-2zM1023.5 792.5h2v2h-2zM1034.5 792.5h2v2h-2zM1045.5 792.5h2v2h-2zM1056.5 792.5h2v2h-2zM1067.5 792.5h2v2h-2zM1078.5 792.5h2v2h-2zM1090.5 792.5h2v2h-2zM1101.5 792.5h2v2h-2zM1112.5 792.5h2v2h-2zM18.5 863.5h2v2h-2zM29.5 863.5h2v2h-2zM40.5 863.5h2v2h-2zM52.5 863.5h2v2h-2zM63.5 863.5h2v2h-2zM74.5 863.5h2v2h-2zM85.5 863.5h2v2h-2zM96.5 863.5h2v2h-2zM107.5 863.5h2v2h-2zM119.5 863.5h2v2h-2zM130.5 863.5h2v2h-2zM141.5 863.5h2v2h-2zM152.5 863.5h2v2h-2zM163.5 863.5h2v2h-2zM174.5 863.5h2v2h-2zM186.5 863.5h2v2h-2zM197.5 863.5h2v2h-2zM208.5 863.5h2v2h-2zM219.5 863.5h2v2h-2zM230.5 863.5h2v2h-2zM241.5 863.5h2v2h-2zM253.5 863.5h2v2h-2zM264.5 863.5h2v2h-2zM275.5 863.5h2v2h-2zM286.5 863.5h2v2h-2zM297.5 863.5h2v2h-2zM308.5 863.5h2v2h-2zM319.5 863.5h2v2h-2zM331.5 863.5h2v2h-2zM342.5 863.5h2v2h-2zM353.5 863.5h2v2h-2zM364.5 863.5h2v2h-2zM375.5 863.5h2v2h-2zM386.5 863.5h2v2h-2zM398.5 863.5h2v2h-2zM409.5 863.5h2v2h-2zM420.5 863.5h2v2h-2zM431.5 863.5h2v2h-2zM442.5 863.5h2v2h-2zM453.5 863.5h2v2h-2zM465.5 863.5h2v2h-2zM476.5 863.5h2v2h-2zM487.5 863.5h2v2h-2zM498.5 863.5h2v2h-2zM509.5 863.5h2v2h-2zM520.5 863.5h2v2h-2zM532.5 863.5h2v2h-2zM543.5 863.5h2v2h-2zM554.5 863.5h2v2h-2zM565.5 863.5h2v2h-2zM576.5 863.5h2v2h-2zM587.5 863.5h2v2h-2zM598.5 863.5h2v2h-2zM610.5 863.5h2v2h-2zM621.5 863.5h2v2h-2zM632.5 863.5h2v2h-2zM643.5 863.5h2v2h-2zM654.5 863.5h2v2h-2zM665.5 863.5h2v2h-2zM677.5 863.5h2v2h-2zM688.5 863.5h2v2h-2zM699.5 863.5h2v2h-2zM710.5 863.5h2v2h-2zM721.5 863.5h2v2h-2zM732.5 863.5h2v2h-2zM744.5 863.5h2v2h-2zM755.5 863.5h2v2h-2zM766.5 863.5h2v2h-2zM777.5 863.5h2v2h-2zM788.5 863.5h2v2h-2zM799.5 863.5h2v2h-2zM811.5 863.5h2v2h-2zM822.5 863.5h2v2h-2zM833.5 863.5h2v2h-2zM844.5 863.5h2v2h-2zM855.5 863.5h2v2h-2zM866.5 863.5h2v2h-2zM877.5 863.5h2v2h-2zM889.5 863.5h2v2h-2zM900.5 863.5h2v2h-2zM911.5 863.5h2v2h-2zM922.5 863.5h2v2h-2zM933.5 863.5h2v2h-2zM944.5 863.5h2v2h-2zM956.5 863.5h2v2h-2zM967.5 863.5h2v2h-2zM978.5 863.5h2v2h-2zM989.5 863.5h2v2h-2zM1000.5 863.5h2v2h-2zM1011.5 863.5h2v2h-2zM1023.5 863.5h2v2h-2zM1034.5 863.5h2v2h-2zM1045.5 863.5h2v2h-2zM1056.5 863.5h2v2h-2zM1067.5 863.5h2v2h-2zM1078.5 863.5h2v2h-2zM1090.5 863.5h2v2h-2zM1101.5 863.5h2v2h-2zM1112.5 863.5h2v2h-2zM119.5 229.5h2v2h-2zM119.5 236.5h2v2h-2zM119.5 243.5h2v2h-2zM119.5 250.5h2v2h-2zM119.5 257.5h2v2h-2zM119.5 264.5h2v2h-2zM119.5 271.5h2v2h-2zM119.5 279.5h2v2h-2zM119.5 286.5h2v2h-2zM119.5 300.5h2v2h-2zM119.5 307.5h2v2h-2zM119.5 314.5h2v2h-2zM119.5 321.5h2v2h-2zM119.5 329.5h2v2h-2zM119.5 336.5h2v2h-2zM119.5 343.5h2v2h-2zM119.5 350.5h2v2h-2zM119.5 357.5h2v2h-2zM119.5 371.5h2v2h-2zM119.5 379.5h2v2h-2zM119.5 386.5h2v2h-2zM119.5 393.5h2v2h-2zM119.5 400.5h2v2h-2zM119.5 407.5h2v2h-2zM119.5 414.5h2v2h-2zM119.5 421.5h2v2h-2zM119.5 429.5h2v2h-2zM119.5 443.5h2v2h-2zM119.5 450.5h2v2h-2zM119.5 457.5h2v2h-2zM119.5 464.5h2v2h-2zM119.5 471.5h2v2h-2zM119.5 479.5h2v2h-2zM119.5 486.5h2v2h-2zM119.5 493.5h2v2h-2zM119.5 500.5h2v2h-2zM119.5 514.5h2v2h-2zM119.5 521.5h2v2h-2zM119.5 529.5h2v2h-2zM119.5 536.5h2v2h-2zM119.5 543.5h2v2h-2zM119.5 550.5h2v2h-2zM119.5 557.5h2v2h-2zM119.5 564.5h2v2h-2zM119.5 571.5h2v2h-2zM119.5 586.5h2v2h-2zM119.5 593.5h2v2h-2zM119.5 600.5h2v2h-2zM119.5 607.5h2v2h-2zM119.5 614.5h2v2h-2zM119.5 621.5h2v2h-2zM119.5 628.5h2v2h-2zM119.5 636.5h2v2h-2zM119.5 643.5h2v2h-2zM119.5 657.5h2v2h-2zM119.5 664.5h2v2h-2zM119.5 671.5h2v2h-2zM119.5 678.5h2v2h-2zM119.5 686.5h2v2h-2zM119.5 693.5h2v2h-2zM119.5 700.5h2v2h-2zM119.5 707.5h2v2h-2zM119.5 714.5h2v2h-2zM119.5 728.5h2v2h-2zM119.5 736.5h2v2h-2zM119.5 743.5h2v2h-2zM119.5 750.5h2v2h-2zM119.5 757.5h2v2h-2zM119.5 764.5h2v2h-2zM119.5 771.5h2v2h-2zM119.5 778.5h2v2h-2zM119.5 786.5h2v2h-2zM119.5 800.5h2v2h-2zM119.5 807.5h2v2h-2zM119.5 814.5h2v2h-2zM119.5 821.5h2v2h-2zM119.5 828.5h2v2h-2zM119.5 836.5h2v2h-2zM119.5 843.5h2v2h-2zM119.5 850.5h2v2h-2zM119.5 857.5h2v2h-2zM119.5 871.5h2v2h-2zM119.5 878.5h2v2h-2zM119.5 886.5h2v2h-2zM119.5 893.5h2v2h-2zM119.5 900.5h2v2h-2zM119.5 907.5h2v2h-2zM119.5 914.5h2v2h-2zM119.5 921.5h2v2h-2zM119.5 928.5h2v2h-2zM230.5 229.5h2v2h-2zM230.5 236.5h2v2h-2zM230.5 243.5h2v2h-2zM230.5 250.5h2v2h-2zM230.5 257.5h2v2h-2zM230.5 264.5h2v2h-2zM230.5 271.5h2v2h-2zM230.5 279.5h2v2h-2zM230.5 286.5h2v2h-2zM230.5 300.5h2v2h-2zM230.5 307.5h2v2h-2zM230.5 314.5h2v2h-2zM230.5 321.5h2v2h-2zM230.5 329.5h2v2h-2zM230.5 336.5h2v2h-2zM230.5 343.5h2v2h-2zM230.5 350.5h2v2h-2zM230.5 357.5h2v2h-2zM230.5 371.5h2v2h-2zM230.5 379.5h2v2h-2zM230.5 386.5h2v2h-2zM230.5 393.5h2v2h-2zM230.5 400.5h2v2h-2zM230.5 407.5h2v2h-2zM230.5 414.5h2v2h-2zM230.5 421.5h2v2h-2zM230.5 429.5h2v2h-2zM230.5 443.5h2v2h-2zM230.5 450.5h2v2h-2zM230.5 457.5h2v2h-2zM230.5 464.5h2v2h-2zM230.5 471.5h2v2h-2zM230.5 479.5h2v2h-2zM230.5 486.5h2v2h-2zM230.5 493.5h2v2h-2zM230.5 500.5h2v2h-2zM230.5 514.5h2v2h-2zM230.5 521.5h2v2h-2zM230.5 529.5h2v2h-2zM230.5 536.5h2v2h-2zM230.5 543.5h2v2h-2zM230.5 550.5h2v2h-2zM230.5 557.5h2v2h-2zM230.5 564.5h2v2h-2zM230.5 571.5h2v2h-2zM230.5 586.5h2v2h-2zM230.5 593.5h2v2h-2zM230.5 600.5h2v2h-2zM230.5 607.5h2v2h-2zM230.5 614.5h2v2h-2zM230.5 621.5h2v2h-2zM230.5 628.5h2v2h-2zM230.5 636.5h2v2h-2zM230.5 643.5h2v2h-2zM230.5 657.5h2v2h-2zM230.5 664.5h2v2h-2zM230.5 671.5h2v2h-2zM230.5 678.5h2v2h-2zM230.5 686.5h2v2h-2zM230.5 693.5h2v2h-2zM230.5 700.5h2v2h-2zM230.5 707.5h2v2h-2zM230.5 714.5h2v2h-2zM230.5 728.5h2v2h-2zM230.5 736.5h2v2h-2zM230.5 743.5h2v2h-2zM230.5 750.5h2v2h-2zM230.5 757.5h2v2h-2zM230.5 764.5h2v2h-2zM230.5 771.5h2v2h-2zM230.5 778.5h2v2h-2zM230.5 786.5h2v2h-2zM230.5 800.5h2v2h-2zM230.5 807.5h2v2h-2zM230.5 814.5h2v2h-2zM230.5 821.5h2v2h-2zM230.5 828.5h2v2h-2zM230.5 836.5h2v2h-2zM230.5 843.5h2v2h-2zM230.5 850.5h2v2h-2zM230.5 857.5h2v2h-2zM230.5 871.5h2v2h-2zM230.5 878.5h2v2h-2zM230.5 886.5h2v2h-2zM230.5 893.5h2v2h-2zM230.5 900.5h2v2h-2zM230.5 907.5h2v2h-2zM230.5 914.5h2v2h-2zM230.5 921.5h2v2h-2zM230.5 928.5h2v2h-2zM342.5 229.5h2v2h-2zM342.5 236.5h2v2h-2zM342.5 243.5h2v2h-2zM342.5 250.5h2v2h-2zM342.5 257.5h2v2h-2zM342.5 264.5h2v2h-2zM342.5 271.5h2v2h-2zM342.5 279.5h2v2h-2zM342.5 286.5h2v2h-2zM342.5 300.5h2v2h-2zM342.5 307.5h2v2h-2zM342.5 314.5h2v2h-2zM342.5 321.5h2v2h-2zM342.5 329.5h2v2h-2zM342.5 336.5h2v2h-2zM342.5 343.5h2v2h-2zM342.5 350.5h2v2h-2zM342.5 357.5h2v2h-2zM342.5 371.5h2v2h-2zM342.5 379.5h2v2h-2zM342.5 386.5h2v2h-2zM342.5 393.5h2v2h-2zM342.5 400.5h2v2h-2zM342.5 407.5h2v2h-2zM342.5 414.5h2v2h-2zM342.5 421.5h2v2h-2zM342.5 429.5h2v2h-2zM342.5 443.5h2v2h-2zM342.5 450.5h2v2h-2zM342.5 457.5h2v2h-2zM342.5 464.5h2v2h-2zM342.5 471.5h2v2h-2zM342.5 479.5h2v2h-2zM342.5 486.5h2v2h-2zM342.5 493.5h2v2h-2zM342.5 500.5h2v2h-2zM342.5 514.5h2v2h-2zM342.5 521.5h2v2h-2zM342.5 529.5h2v2h-2zM342.5 536.5h2v2h-2zM342.5 543.5h2v2h-2zM342.5 550.5h2v2h-2zM342.5 557.5h2v2h-2zM342.5 564.5h2v2h-2zM342.5 571.5h2v2h-2zM342.5 586.5h2v2h-2zM342.5 593.5h2v2h-2zM342.5 600.5h2v2h-2zM342.5 607.5h2v2h-2zM342.5 614.5h2v2h-2zM342.5 621.5h2v2h-2zM342.5 628.5h2v2h-2zM342.5 636.5h2v2h-2zM342.5 643.5h2v2h-2zM342.5 657.5h2v2h-2zM342.5 664.5h2v2h-2zM342.5 671.5h2v2h-2zM342.5 678.5h2v2h-2zM342.5 686.5h2v2h-2zM342.5 693.5h2v2h-2zM342.5 700.5h2v2h-2zM342.5 707.5h2v2h-2zM342.5 714.5h2v2h-2zM342.5 728.5h2v2h-2zM342.5 736.5h2v2h-2zM342.5 743.5h2v2h-2zM342.5 750.5h2v2h-2zM342.5 757.5h2v2h-2zM342.5 764.5h2v2h-2zM342.5 771.5h2v2h-2zM342.5 778.5h2v2h-2zM342.5 786.5h2v2h-2zM342.5 800.5h2v2h-2zM342.5 807.5h2v2h-2zM342.5 814.5h2v2h-2zM342.5 821.5h2v2h-2zM342.5 828.5h2v2h-2zM342.5 836.5h2v2h-2zM342.5 843.5h2v2h-2zM342.5 850.5h2v2h-2zM342.5 857.5h2v2h-2zM342.5 871.5h2v2h-2zM342.5 878.5h2v2h-2zM342.5 886.5h2v2h-2zM342.5 893.5h2v2h-2zM342.5 900.5h2v2h-2zM342.5 907.5h2v2h-2zM342.5 914.5h2v2h-2zM342.5 921.5h2v2h-2zM342.5 928.5h2v2h-2zM453.5 229.5h2v2h-2zM453.5 236.5h2v2h-2zM453.5 243.5h2v2h-2zM453.5 250.5h2v2h-2zM453.5 257.5h2v2h-2zM453.5 264.5h2v2h-2zM453.5 271.5h2v2h-2zM453.5 279.5h2v2h-2zM453.5 286.5h2v2h-2zM453.5 300.5h2v2h-2zM453.5 307.5h2v2h-2zM453.5 314.5h2v2h-2zM453.5 321.5h2v2h-2zM453.5 329.5h2v2h-2zM453.5 336.5h2v2h-2zM453.5 343.5h2v2h-2zM453.5 350.5h2v2h-2zM453.5 357.5h2v2h-2zM453.5 371.5h2v2h-2zM453.5 379.5h2v2h-2zM453.5 386.5h2v2h-2zM453.5 393.5h2v2h-2zM453.5 400.5h2v2h-2zM453.5 407.5h2v2h-2zM453.5 414.5h2v2h-2zM453.5 421.5h2v2h-2zM453.5 429.5h2v2h-2zM453.5 443.5h2v2h-2zM453.5 450.5h2v2h-2zM453.5 457.5h2v2h-2zM453.5 464.5h2v2h-2zM453.5 471.5h2v2h-2zM453.5 479.5h2v2h-2zM453.5 486.5h2v2h-2zM453.5 493.5h2v2h-2zM453.5 500.5h2v2h-2zM453.5 514.5h2v2h-2zM453.5 521.5h2v2h-2zM453.5 529.5h2v2h-2zM453.5 536.5h2v2h-2zM453.5 543.5h2v2h-2zM453.5 550.5h2v2h-2zM453.5 557.5h2v2h-2zM453.5 564.5h2v2h-2zM453.5 571.5h2v2h-2zM453.5 586.5h2v2h-2zM453.5 593.5h2v2h-2zM453.5 600.5h2v2h-2zM453.5 607.5h2v2h-2zM453.5 614.5h2v2h-2zM453.5 621.5h2v2h-2zM453.5 628.5h2v2h-2zM453.5 636.5h2v2h-2zM453.5 643.5h2v2h-2zM453.5 657.5h2v2h-2zM453.5 664.5h2v2h-2zM453.5 671.5h2v2h-2zM453.5 678.5h2v2h-2zM453.5 686.5h2v2h-2zM453.5 693.5h2v2h-2zM453.5 700.5h2v2h-2zM453.5 707.5h2v2h-2zM453.5 714.5h2v2h-2zM453.5 728.5h2v2h-2zM453.5 736.5h2v2h-2zM453.5 743.5h2v2h-2zM453.5 750.5h2v2h-2zM453.5 757.5h2v2h-2zM453.5 764.5h2v2h-2zM453.5 771.5h2v2h-2zM453.5 778.5h2v2h-2zM453.5 786.5h2v2h-2zM453.5 800.5h2v2h-2zM453.5 807.5h2v2h-2zM453.5 814.5h2v2h-2zM453.5 821.5h2v2h-2zM453.5 828.5h2v2h-2zM453.5 836.5h2v2h-2zM453.5 843.5h2v2h-2zM453.5 850.5h2v2h-2zM453.5 857.5h2v2h-2zM453.5 871.5h2v2h-2zM453.5 878.5h2v2h-2zM453.5 886.5h2v2h-2zM453.5 893.5h2v2h-2zM453.5 900.5h2v2h-2zM453.5 907.5h2v2h-2zM453.5 914.5h2v2h-2zM453.5 921.5h2v2h-2zM453.5 928.5h2v2h-2zM565.5 229.5h2v2h-2zM565.5 236.5h2v2h-2zM565.5 243.5h2v2h-2zM565.5 250.5h2v2h-2zM565.5 257.5h2v2h-2zM565.5 264.5h2v2h-2zM565.5 271.5h2v2h-2zM565.5 279.5h2v2h-2zM565.5 286.5h2v2h-2zM565.5 300.5h2v2h-2zM565.5 307.5h2v2h-2zM565.5 314.5h2v2h-2zM565.5 321.5h2v2h-2zM565.5 329.5h2v2h-2zM565.5 336.5h2v2h-2zM565.5 343.5h2v2h-2zM565.5 350.5h2v2h-2zM565.5 357.5h2v2h-2zM565.5 371.5h2v2h-2zM565.5 379.5h2v2h-2zM565.5 386.5h2v2h-2zM565.5 393.5h2v2h-2zM565.5 400.5h2v2h-2zM565.5 407.5h2v2h-2zM565.5 414.5h2v2h-2zM565.5 421.5h2v2h-2zM565.5 429.5h2v2h-2zM565.5 443.5h2v2h-2zM565.5 450.5h2v2h-2zM565.5 457.5h2v2h-2zM565.5 464.5h2v2h-2zM565.5 471.5h2v2h-2zM565.5 479.5h2v2h-2zM565.5 486.5h2v2h-2zM565.5 493.5h2v2h-2zM565.5 500.5h2v2h-2zM565.5 514.5h2v2h-2zM565.5 521.5h2v2h-2zM565.5 529.5h2v2h-2zM565.5 536.5h2v2h-2zM565.5 543.5h2v2h-2zM565.5 550.5h2v2h-2zM565.5 557.5h2v2h-2zM565.5 564.5h2v2h-2zM565.5 571.5h2v2h-2zM565.5 586.5h2v2h-2zM565.5 593.5h2v2h-2zM565.5 600.5h2v2h-2zM565.5 607.5h2v2h-2zM565.5 614.5h2v2h-2zM565.5 621.5h2v2h-2zM565.5 628.5h2v2h-2zM565.5 636.5h2v2h-2zM565.5 643.5h2v2h-2zM565.5 657.5h2v2h-2zM565.5 664.5h2v2h-2zM565.5 671.5h2v2h-2zM565.5 678.5h2v2h-2zM565.5 686.5h2v2h-2zM565.5 693.5h2v2h-2zM565.5 700.5h2v2h-2zM565.5 707.5h2v2h-2zM565.5 714.5h2v2h-2zM565.5 728.5h2v2h-2zM565.5 736.5h2v2h-2zM565.5 743.5h2v2h-2zM565.5 750.5h2v2h-2zM565.5 757.5h2v2h-2zM565.5 764.5h2v2h-2zM565.5 771.5h2v2h-2zM565.5 778.5h2v2h-2zM565.5 786.5h2v2h-2zM565.5 800.5h2v2h-2zM565.5 807.5h2v2h-2zM565.5 814.5h2v2h-2zM565.5 821.5h2v2h-2zM565.5 828.5h2v2h-2zM565.5 836.5h2v2h-2zM565.5 843.5h2v2h-2zM565.5 850.5h2v2h-2zM565.5 857.5h2v2h-2zM565.5 871.5h2v2h-2zM565.5 878.5h2v2h-2zM565.5 886.5h2v2h-2zM565.5 893.5h2v2h-2zM565.5 900.5h2v2h-2zM565.5 907.5h2v2h-2zM565.5 914.5h2v2h-2zM565.5 921.5h2v2h-2zM565.5 928.5h2v2h-2zM677.5 229.5h2v2h-2zM677.5 236.5h2v2h-2zM677.5 243.5h2v2h-2zM677.5 250.5h2v2h-2zM677.5 257.5h2v2h-2zM677.5 264.5h2v2h-2zM677.5 271.5h2v2h-2zM677.5 279.5h2v2h-2zM677.5 286.5h2v2h-2zM677.5 300.5h2v2h-2zM677.5 307.5h2v2h-2zM677.5 314.5h2v2h-2zM677.5 321.5h2v2h-2zM677.5 329.5h2v2h-2zM677.5 336.5h2v2h-2zM677.5 343.5h2v2h-2zM677.5 350.5h2v2h-2zM677.5 357.5h2v2h-2zM677.5 371.5h2v2h-2zM677.5 379.5h2v2h-2zM677.5 386.5h2v2h-2zM677.5 393.5h2v2h-2zM677.5 400.5h2v2h-2zM677.5 407.5h2v2h-2zM677.5 414.5h2v2h-2zM677.5 421.5h2v2h-2zM677.5 429.5h2v2h-2zM677.5 443.5h2v2h-2zM677.5 450.5h2v2h-2zM677.5 457.5h2v2h-2zM677.5 464.5h2v2h-2zM677.5 471.5h2v2h-2zM677.5 479.5h2v2h-2zM677.5 486.5h2v2h-2zM677.5 493.5h2v2h-2zM677.5 500.5h2v2h-2zM677.5 514.5h2v2h-2zM677.5 521.5h2v2h-2zM677.5 529.5h2v2h-2zM677.5 536.5h2v2h-2zM677.5 543.5h2v2h-2zM677.5 550.5h2v2h-2zM677.5 557.5h2v2h-2zM677.5 564.5h2v2h-2zM677.5 571.5h2v2h-2zM677.5 586.5h2v2h-2zM677.5 593.5h2v2h-2zM677.5 600.5h2v2h-2zM677.5 607.5h2v2h-2zM677.5 614.5h2v2h-2zM677.5 621.5h2v2h-2zM677.5 628.5h2v2h-2zM677.5 636.5h2v2h-2zM677.5 643.5h2v2h-2zM677.5 657.5h2v2h-2zM677.5 664.5h2v2h-2zM677.5 671.5h2v2h-2zM677.5 678.5h2v2h-2zM677.5 686.5h2v2h-2zM677.5 693.5h2v2h-2zM677.5 700.5h2v2h-2zM677.5 707.5h2v2h-2zM677.5 714.5h2v2h-2zM677.5 728.5h2v2h-2zM677.5 736.5h2v2h-2zM677.5 743.5h2v2h-2zM677.5 750.5h2v2h-2zM677.5 757.5h2v2h-2zM677.5 764.5h2v2h-2zM677.5 771.5h2v2h-2zM677.5 778.5h2v2h-2zM677.5 786.5h2v2h-2zM677.5 800.5h2v2h-2zM677.5 807.5h2v2h-2zM677.5 814.5h2v2h-2zM677.5 821.5h2v2h-2zM677.5 828.5h2v2h-2zM677.5 836.5h2v2h-2zM677.5 843.5h2v2h-2zM677.5 850.5h2v2h-2zM677.5 857.5h2v2h-2zM677.5 871.5h2v2h-2zM677.5 878.5h2v2h-2zM677.5 886.5h2v2h-2zM677.5 893.5h2v2h-2zM677.5 900.5h2v2h-2zM677.5 907.5h2v2h-2zM677.5 914.5h2v2h-2zM677.5 921.5h2v2h-2zM677.5 928.5h2v2h-2zM788.5 229.5h2v2h-2zM788.5 236.5h2v2h-2zM788.5 243.5h2v2h-2zM788.5 250.5h2v2h-2zM788.5 257.5h2v2h-2zM788.5 264.5h2v2h-2zM788.5 271.5h2v2h-2zM788.5 279.5h2v2h-2zM788.5 286.5h2v2h-2zM788.5 300.5h2v2h-2zM788.5 307.5h2v2h-2zM788.5 314.5h2v2h-2zM788.5 321.5h2v2h-2zM788.5 329.5h2v2h-2zM788.5 336.5h2v2h-2zM788.5 343.5h2v2h-2zM788.5 350.5h2v2h-2zM788.5 357.5h2v2h-2zM788.5 371.5h2v2h-2zM788.5 379.5h2v2h-2zM788.5 386.5h2v2h-2zM788.5 393.5h2v2h-2zM788.5 400.5h2v2h-2zM788.5 407.5h2v2h-2zM788.5 414.5h2v2h-2zM788.5 421.5h2v2h-2zM788.5 429.5h2v2h-2zM788.5 443.5h2v2h-2zM788.5 450.5h2v2h-2zM788.5 457.5h2v2h-2zM788.5 464.5h2v2h-2zM788.5 471.5h2v2h-2zM788.5 479.5h2v2h-2zM788.5 486.5h2v2h-2zM788.5 493.5h2v2h-2zM788.5 500.5h2v2h-2zM788.5 514.5h2v2h-2zM788.5 521.5h2v2h-2zM788.5 529.5h2v2h-2zM788.5 536.5h2v2h-2zM788.5 543.5h2v2h-2zM788.5 550.5h2v2h-2zM788.5 557.5h2v2h-2zM788.5 564.5h2v2h-2zM788.5 571.5h2v2h-2zM788.5 586.5h2v2h-2zM788.5 593.5h2v2h-2zM788.5 600.5h2v2h-2zM788.5 607.5h2v2h-2zM788.5 614.5h2v2h-2zM788.5 621.5h2v2h-2zM788.5 628.5h2v2h-2zM788.5 636.5h2v2h-2zM788.5 643.5h2v2h-2zM788.5 657.5h2v2h-2zM788.5 664.5h2v2h-2zM788.5 671.5h2v2h-2zM788.5 678.5h2v2h-2zM788.5 686.5h2v2h-2zM788.5 693.5h2v2h-2zM788.5 700.5h2v2h-2zM788.5 707.5h2v2h-2zM788.5 714.5h2v2h-2zM788.5 728.5h2v2h-2zM788.5 736.5h2v2h-2zM788.5 743.5h2v2h-2zM788.5 750.5h2v2h-2zM788.5 757.5h2v2h-2zM788.5 764.5h2v2h-2zM788.5 771.5h2v2h-2zM788.5 778.5h2v2h-2zM788.5 786.5h2v2h-2zM788.5 800.5h2v2h-2zM788.5 807.5h2v2h-2zM788.5 814.5h2v2h-2zM788.5 821.5h2v2h-2zM788.5 828.5h2v2h-2zM788.5 836.5h2v2h-2zM788.5 843.5h2v2h-2zM788.5 850.5h2v2h-2zM788.5 857.5h2v2h-2zM788.5 871.5h2v2h-2zM788.5 878.5h2v2h-2zM788.5 886.5h2v2h-2zM788.5 893.5h2v2h-2zM788.5 900.5h2v2h-2zM788.5 907.5h2v2h-2zM788.5 914.5h2v2h-2zM788.5 921.5h2v2h-2zM788.5 928.5h2v2h-2zM900.5 229.5h2v2h-2zM900.5 236.5h2v2h-2zM900.5 243.5h2v2h-2zM900.5 250.5h2v2h-2zM900.5 257.5h2v2h-2zM900.5 264.5h2v2h-2zM900.5 271.5h2v2h-2zM900.5 279.5h2v2h-2zM900.5 286.5h2v2h-2zM900.5 300.5h2v2h-2zM900.5 307.5h2v2h-2zM900.5 314.5h2v2h-2zM900.5 321.5h2v2h-2zM900.5 329.5h2v2h-2zM900.5 336.5h2v2h-2zM900.5 343.5h2v2h-2zM900.5 350.5h2v2h-2zM900.5 357.5h2v2h-2zM900.5 371.5h2v2h-2zM900.5 379.5h2v2h-2zM900.5 386.5h2v2h-2zM900.5 393.5h2v2h-2zM900.5 400.5h2v2h-2zM900.5 407.5h2v2h-2zM900.5 414.5h2v2h-2zM900.5 421.5h2v2h-2zM900.5 429.5h2v2h-2zM900.5 443.5h2v2h-2zM900.5 450.5h2v2h-2zM900.5 457.5h2v2h-2zM900.5 464.5h2v2h-2zM900.5 471.5h2v2h-2zM900.5 479.5h2v2h-2zM900.5 486.5h2v2h-2zM900.5 493.5h2v2h-2zM900.5 500.5h2v2h-2zM900.5 514.5h2v2h-2zM900.5 521.5h2v2h-2zM900.5 529.5h2v2h-2zM900.5 536.5h2v2h-2zM900.5 543.5h2v2h-2zM900.5 550.5h2v2h-2zM900.5 557.5h2v2h-2zM900.5 564.5h2v2h-2zM900.5 571.5h2v2h-2zM900.5 586.5h2v2h-2zM900.5 593.5h2v2h-2zM900.5 600.5h2v2h-2zM900.5 607.5h2v2h-2zM900.5 614.5h2v2h-2zM900.5 621.5h2v2h-2zM900.5 628.5h2v2h-2zM900.5 636.5h2v2h-2zM900.5 643.5h2v2h-2zM900.5 657.5h2v2h-2zM900.5 664.5h2v2h-2zM900.5 671.5h2v2h-2zM900.5 678.5h2v2h-2zM900.5 686.5h2v2h-2zM900.5 693.5h2v2h-2zM900.5 700.5h2v2h-2zM900.5 707.5h2v2h-2zM900.5 714.5h2v2h-2zM900.5 728.5h2v2h-2zM900.5 736.5h2v2h-2zM900.5 743.5h2v2h-2zM900.5 750.5h2v2h-2zM900.5 757.5h2v2h-2zM900.5 764.5h2v2h-2zM900.5 771.5h2v2h-2zM900.5 778.5h2v2h-2zM900.5 786.5h2v2h-2zM900.5 800.5h2v2h-2zM900.5 807.5h2v2h-2zM900.5 814.5h2v2h-2zM900.5 821.5h2v2h-2zM900.5 828.5h2v2h-2zM900.5 836.5h2v2h-2zM900.5 843.5h2v2h-2zM900.5 850.5h2v2h-2zM900.5 857.5h2v2h-2zM900.5 871.5h2v2h-2zM900.5 878.5h2v2h-2zM900.5 886.5h2v2h-2zM900.5 893.5h2v2h-2zM900.5 900.5h2v2h-2zM900.5 907.5h2v2h-2zM900.5 914.5h2v2h-2zM900.5 921.5h2v2h-2zM900.5 928.5h2v2h-2zM1011.5 229.5h2v2h-2zM1011.5 236.5h2v2h-2zM1011.5 243.5h2v2h-2zM1011.5 250.5h2v2h-2zM1011.5 257.5h2v2h-2zM1011.5 264.5h2v2h-2zM1011.5 271.5h2v2h-2zM1011.5 279.5h2v2h-2zM1011.5 286.5h2v2h-2zM1011.5 300.5h2v2h-2zM1011.5 307.5h2v2h-2zM1011.5 314.5h2v2h-2zM1011.5 321.5h2v2h-2zM1011.5 329.5h2v2h-2zM1011.5 336.5h2v2h-2zM1011.5 343.5h2v2h-2zM1011.5 350.5h2v2h-2zM1011.5 357.5h2v2h-2zM1011.5 371.5h2v2h-2zM1011.5 379.5h2v2h-2zM1011.5 386.5h2v2h-2zM1011.5 393.5h2v2h-2zM1011.5 400.5h2v2h-2zM1011.5 407.5h2v2h-2zM1011.5 414.5h2v2h-2zM1011.5 421.5h2v2h-2zM1011.5 429.5h2v2h-2zM1011.5 443.5h2v2h-2zM1011.5 450.5h2v2h-2zM1011.5 457.5h2v2h-2zM1011.5 464.5h2v2h-2zM1011.5 471.5h2v2h-2zM1011.5 479.5h2v2h-2zM1011.5 486.5h2v2h-2zM1011.5 493.5h2v2h-2zM1011.5 500.5h2v2h-2zM1011.5 514.5h2v2h-2zM1011.5 521.5h2v2h-2zM1011.5 529.5h2v2h-2zM1011.5 536.5h2v2h-2zM1011.5 543.5h2v2h-2zM1011.5 550.5h2v2h-2zM1011.5 557.5h2v2h-2zM1011.5 564.5h2v2h-2zM1011.5 571.5h2v2h-2zM1011.5 586.5h2v2h-2zM1011.5 593.5h2v2h-2zM1011.5 600.5h2v2h-2zM1011.5 607.5h2v2h-2zM1011.5 614.5h2v2h-2zM1011.5 621.5h2v2h-2zM1011.5 628.5h2v2h-2zM1011.5 636.5h2v2h-2zM1011.5 643.5h2v2h-2zM1011.5 657.5h2v2h-2zM1011.5 664.5h2v2h-2zM1011.5 671.5h2v2h-2zM1011.5 678.5h2v2h-2zM1011.5 686.5h2v2h-2zM1011.5 693.5h2v2h-2zM1011.5 700.5h2v2h-2zM1011.5 707.5h2v2h-2zM1011.5 714.5h2v2h-2zM1011.5 728.5h2v2h-2zM1011.5 736.5h2v2h-2zM1011.5 743.5h2v2h-2zM1011.5 750.5h2v2h-2zM1011.5 757.5h2v2h-2zM1011.5 764.5h2v2h-2zM1011.5 771.5h2v2h-2zM1011.5 778.5h2v2h-2zM1011.5 786.5h2v2h-2zM1011.5 800.5h2v2h-2zM1011.5 807.5h2v2h-2zM1011.5 814.5h2v2h-2zM1011.5 821.5h2v2h-2zM1011.5 828.5h2v2h-2zM1011.5 836.5h2v2h-2zM1011.5 843.5h2v2h-2zM1011.5 850.5h2v2h-2zM1011.5 857.5h2v2h-2zM1011.5 871.5h2v2h-2zM1011.5 878.5h2v2h-2zM1011.5 886.5h2v2h-2zM1011.5 893.5h2v2h-2zM1011.5 900.5h2v2h-2zM1011.5 907.5h2v2h-2zM1011.5 914.5h2v2h-2zM1011.5 921.5h2v2h-2zM1011.5 928.5h2v2h-2z" fill="#606060"/>
<path d="M19 295h1v1h-1zM30 295h1v1h-1zM41 295h1v1h-1zM53 295h1v1h-1zM64 295h1v1h-1zM75 295h1v1h-1zM86 295h1v1h-1zM97 295h1v1h-1zM108 295h1v1h-1zM120 295h1v1h-1zM131 295h1v1h-1zM142 295h1v1h-1zM153 295h1v1h-1zM164 295h1v1h-1zM175 295h1v1h-1zM187 295h1v1h-1zM198 295h1v1h-1zM209 295h1v1h-1zM220 295h1v1h-1zM231 295h1v1h-1zM242 295h1v1h-1zM254 295h1v1h-1zM265 295h1v1h-1zM276 295h1v1h-1zM287 295h1v1h-1zM298 295h1v1h-1zM309 295h1v1h-1zM320 295h1v1h-1zM332 295h1v1h-1zM343 295h1v1h-1zM354 295h1v1h-1zM365 295h1v1h-1zM376 295h1v1h-1zM387 295h1v1h-1zM399 295h1v1h-1zM410 295h1v1h-1zM421 295h1v1h-1zM432 295h1v1h-1zM443 295h1v1h-1zM454 295h1v1h-1zM466 295h1v1h-1zM477 295h1v1h-1zM488 295h1v1h-1zM499 295h1v1h-1zM510 295h1v1h-1zM521 295h1v1h-1zM533 295h1v1h-1zM544 295h1v1h-1zM555 295h1v1h-1zM566 295h1v1h-1zM577 295h1v1h-1zM588 295h1v1h-1zM599 295h1v1h-1zM611 295h1v1h-1zM622 295h1v1h-1zM633 295h1v1h-1zM644 295h1v1h-1zM655 295h1v1h-1zM666 295h1v1h-1zM678 295h1v1h-1zM689 295h1v1h-1zM700 295h1v1h-1zM711 295h1v1h-1zM722 295h1v1h-1zM733 295h1v1h-1zM745 295h1v1h-1zM756 295h1v1h-1zM767 295h1v1h-1zM778 295h1v1h-1zM789 295h1v1h-1zM800 295h1v1h-1zM812 295h1v1h-1zM823 295h1v1h-1zM834 295h1v1h-1zM845 295h1v1h-1zM856 295h1v1h-1zM867 295h1v1h-1zM878 295h1v1h-1zM890 295h1v1h-1zM901 295h1v1h-1zM912 295h1v1h-1zM923 295h1v1h-1zM934 295h1v1h-1zM945 295h1v1h-1zM957 295h1v1h-1zM968 295h1v1h-1zM979 295h1v1h-1zM990 295h1v1h-1zM1001 295h1v1h-1zM1012 295h1v1h-1zM1024 295h1v1h-1zM1035 295h1v1h-1zM1046 295h1v1h-1zM1057 295h1v1h-1zM1068 295h1v1h-1zM1079 295h1v1h-1zM1091 295h1v1h-1zM1102 295h1v1h-1zM1113 295h1v1h-1zM19 366h1v1h-1zM30 366h1v1h-1zM41 366h1v1h-1zM53 366h1v1h-1zM64 366h1v1h-1zM75 366h1v1h-1zM86 366h1v1h-1zM97 366h1v1h-1zM108 366h1v1h-1zM120 366h1v1h-1zM131 366h1v1h-1zM142 366h1v1h-1zM153 366h1v1h-1zM164 366h1v1h-1zM175 366h1v1h-1zM187 366h1v1h-1zM198 366h1v1h-1zM209 366h1v1h-1zM220 366h1v1h-1zM231 366h1v1h-1zM242 366h1v1h-1zM254 366h1v1h-1zM265 366h1v1h-1zM276 366h1v1h-1zM287 366h1v1h-1zM298 366h1v1h-1zM309 366h1v1h-1zM320 366h1v1h-1zM332 366h1v1h-1zM343 366h1v1h-1zM354 366h1v1h-1zM365 366h1v1h-1zM376 366h1v1h-1zM387 366h1v1h-1zM399 366h1v1h-1zM410 366h1v1h-1zM421 366h1v1h-1zM432 366h1v1h-1zM443 366h1v1h-1zM454 366h1v1h-1zM466 366h1v1h-1zM477 366h1v1h-1zM488 366h1v1h-1zM499 366h1v1h-1zM510 366h1v1h-1zM521 366h1v1h-1zM533 366h1v1h-1zM544 366h1v1h-1zM555 366h1v1h-1zM566 366h1v1h-1zM577 366h1v1h-1zM588 366h1v1h-1zM599 366h1v1h-1zM611 366h1v1h-1zM622 366h1v1h-1zM633 366h1v1h-1zM644 366h1v1h-1zM655 366h1v1h-1zM666 366h1v1h-1zM678 366h1v1h-1zM689 366h1v1h-1zM700 366h1v1h-1zM711 366h1v1h-1zM722 366h1v1h-1zM733 366h1v1h-1zM745 366h1v1h-1zM756 366h1v1h-1zM767 366h1v1h-1zM778 366h1v1h-1zM789 366h1v1h-1zM800 366h1v1h-1zM812 366h1v1h-1zM823 366h1v1h-1zM834 366h1v1h-1zM845 366h1v1h-1zM856 366h1v1h-1zM867 366h1v1h-1zM878 366h1v1h-1zM890 366h1v1h-1zM901 366h1v1h-1zM912 366h1v1h-1zM923 366h1v1h-1zM934 366h1v1h-1zM945 366h1v1h-1zM957 366h1v1h-1zM968 366h1v1h-1zM979 366h1v1h-1zM990 366h1v1h-1zM1001 366h1v1h-1zM1012 366h1v1h-1zM1024 366h1v1h-1zM1035 366h1v1h-1zM1046 366h1v1h-1zM1057 366h1v1h-1zM1068 366h1v1h-1zM1079 366h1v1h-1zM1091 366h1v1h-1zM1102 366h1v1h-1zM1113 366h1v1h-1zM19 437h1v1h-1zM30 437h1v1h-1zM41 437h1v1h-1zM53 437h1v1h-1zM64 437h1v1h-1zM75 437h1v1h-1zM86 437h1v1h-1zM97 437h1v1h-1zM108 437h1v1h-1zM120 437h1v1h-1zM131 437h1v1h-1zM142 437h1v1h-1zM153 437h1v1h-1zM164 437h1v1h-1zM175 437h1v1h-1zM187 437h1v1h-1zM198 437h1v1h-1zM209 437h1v1h-1zM220 437h1v1h-1zM231 437h1v1h-1zM242 437h1v1h-1zM254 437h1v1h-1zM265 437h1v1h-1zM276 437h1v1h-1zM287 437h1v1h-1zM298 437h1v1h-1zM309 437h1v1h-1zM320 437h1v1h-1zM332 437h1v1h-1zM343 437h1v1h-1zM354 437h1v1h-1zM365 437h1v1h-1zM376 437h1v1h-1zM387 437h1v1h-1zM399 437h1v1h-1zM410 437h1v1h-1zM421 437h1v1h-1zM432 437h1v1h-1zM443 437h1v1h-1zM454 437h1v1h-1zM466 437h1v1h-1zM477 437h1v1h-1zM488 437h1v1h-1zM499 437h1v1h-1zM510 437h1v1h-1zM521 437h1v1h-1zM533 437h1v1h-1zM544 437h1v1h-1zM555 437h1v1h-1zM566 437h1v1h-1zM577 437h1v1h-1zM588 437h1v1h-1zM599 437h1v1h-1zM611 437h1v1h-1zM622 437h1v1h-1zM633 437h1v1h-1zM644 437h1v1h-1zM655 437h1v1h-1zM666 437h1v1h-1zM678 437h1v1h-1zM689 437h1v1h-1zM700 437h1v1h-1zM711 437h1v1h-1zM722 437h1v1h-1zM733 437h1v1h-1zM745 437h1v1h-1zM756 437h1v1h-1zM767 437h1v1h-1zM778 437h1v1h-1zM789 437h1v1h-1zM800 437h1v1h-1zM812 437h1v1h-1zM823 437h1v1h-1zM834 437h1v1h-1zM845 437h1v1h-1zM856 437h1v1h-1zM867 437h1v1h-1zM878 437h1v1h-1zM890 437h1v1h-1zM901 437h1v1h-1zM912 437h1v1h-1zM923 437h1v1h-1zM934 437h1v1h-1zM945 437h1v1h-1zM957 437h1v1h-1zM968 437h1v1h-1zM979 437h1v1h-1zM990 437h1v1h-1zM1001 437h1v1h-1zM1012 437h1v1h-1zM1024 437h1v1h-1zM1035 437h1v1h-1zM1046 437h1v1h-1zM1057 437h1v1h-1zM1068 437h1v1h-1zM1079 437h1v1h-1zM1091 437h1v1h-1zM1102 437h1v1h-1zM1113 437h1v1h-1zM19 508h1v1h-1zM30 508h1v1h-1zM41 508h1v1h-1zM53 508h1v1h-1zM64 508h1v1h-1zM75 508h1v1h-1zM86 508h1v1h-1zM97 508h1v1h-1zM108 508h1v1h-1zM120 508h1v1h-1zM131 508h1v1h-1zM142 508h1v1h-1zM153 508h1v1h-1zM164 508h1v1h-1zM175 508h1v1h-1zM187 508h1v1h-1zM198 508h1v1h-1zM209 508h1v1h-1zM220 508h1v1h-1zM231 508h1v1h-1zM242 508h1v1h-1zM254 508h1v1h-1zM265 508h1v1h-1zM276 508h1v1h-1zM287 508h1v1h-1zM298 508h1v1h-1zM309 508h1v1h-1zM320 508h1v1h-1zM332 508h1v1h-1zM343 508h1v1h-1zM354 508h1v1h-1zM365 508h1v1h-1zM376 508h1v1h-1zM387 508h1v1h-1zM399 508h1v1h-1zM410 508h1v1h-1zM421 508h1v1h-1zM432 508h1v1h-1zM443 508h1v1h-1zM454 508h1v1h-1zM466 508h1v1h-1zM477 508h1v1h-1zM488 508h1v1h-1zM499 508h1v1h-1zM510 508h1v1h-1zM521 508h1v1h-1zM533 508h1v1h-1zM544 508h1v1h-1zM555 508h1v1h-1zM566 508h1v1h-1zM577 508h1v1h-1zM588 508h1v1h-1zM599 508h1v1h-1zM611 508h1v1h-1zM622 508h1v1h-1zM633 508h1v1h-1zM644 508h1v1h-1zM655 508h1v1h-1zM666 508h1v1h-1zM678 508h1v1h-1zM689 508h1v1h-1zM700 508h1v1h-1zM711 508h1v1h-1zM722 508h1v1h-1zM733 508h1v1h-1zM745 508h1v1h-1zM756 508h1v1h-1zM767 508h1v1h-1zM778 508h1v1h-1zM789 508h1v1h-1zM800 508h1v1h-1zM812 508h1v1h-1zM823 508h1v1h-1zM834 508h1v1h-1zM845 508h1v1h-1zM856 508h1v1h-1zM867 508h1v1h-1zM878 508h1v1h-1zM890 508h1v1h-1zM901 508h1v1h-1zM912 508h1v1h-1zM923 508h1v1h-1zM934 508h1v1h-1zM945 508h1v1h-1zM957 508h1v1h-1zM968 508h1v1h-1zM979 508h1v1h-1zM990 508h1v1h-1zM1001 508h1v1h-1zM1012 508h1v1h-1zM1024 508h1v1h-1zM1035 508h1v1h-1zM1046 508h1v1h-1zM1057 508h1v1h-1zM1068 508h1v1h-1zM1079 508h1v1h-1zM1091 508h1v1h-1zM1102 508h1v1h-1zM1113 508h1v1h-1zM19 580h1v1h-1zM30 580h1v1h-1zM41 580h1v1h-1zM53 580h1v1h-1zM64 580h1v1h-1zM75 580h1v1h-1zM86 580h1v1h-1zM97 580h1v1h-1zM108 580h1v1h-1zM120 580h1v1h-1zM131 580h1v1h-1zM142 580h1v1h-1zM153 580h1v1h-1zM164 580h1v1h-1zM175 580h1v1h-1zM187 580h1v1h-1zM198 580h1v1h-1zM209 580h1v1h-1zM220 580h1v1h-1zM231 580h1v1h-1zM242 580h1v1h-1zM254 580h1v1h-1zM265 580h1v1h-1zM276 580h1v1h-1zM287 580h1v1h-1zM298 580h1v1h-1zM309 580h1v1h-1zM320 580h1v1h-1zM332 580h1v1h-1zM343 580h1v1h-1zM354 580h1v1h-1zM365 580h1v1h-1zM376 580h1v1h-1zM387 580h1v1h-1zM399 580h1v1h-1zM410 580h1v1h-1zM421 580h1v1h-1zM432 580h1v1h-1zM443 580h1v1h-1zM454 580h1v1h-1zM466 580h1v1h-1zM477 580h1v1h-1zM488 580h1v1h-1zM499 580h1v1h-1zM510 580h1v1h-1zM521 580h1v1h-1zM533 580h1v1h-1zM544 580h1v1h-1zM555 580h1v1h-1zM566 580h1v1h-1zM577 580h1v1h-1zM588 580h1v1h-1zM599 580h1v1h-1zM611 580h1v1h-1zM622 580h1v1h-1zM633 580h1v1h-1zM644 580h1v1h-1zM655 580h1v1h-1zM666 580h1v1h-1zM678 580h1v1h-1zM689 580h1v1h-1zM700 580h1v1h-1zM711 580h1v1h-1zM722 580h1v1h-1zM733 580h1v1h-1zM745 580h1v1h-1zM756 580h1v1h-1zM767 580h1v1h-1zM778 580h1v1h-1zM789 580h1v1h-1zM800 580h1v1h-1zM812 580h1v1h-1zM823 580h1v1h-1zM834 580h1v1h-1zM845 580h1v1h-1zM856 580h1v1h-1zM867 580h1v1h-1zM878 580h1v1h-1zM890 580h1v1h-1zM901 580h1v1h-1zM912 580h1v1h-1zM923 580h1v1h-1zM934 580h1v1h-1zM945 580h1v1h-1zM957 580h1v1h-1zM968 580h1v1h-1zM979 580h1v1h-1zM990 580h1v1h-1zM1001 580h1v1h-1zM1012 580h1v1h-1zM1024 580h1v1h-1zM1035 580h1v1h-1zM1046 580h1v1h-1zM1057 580h1v1h-1zM1068 580h1v1h-1zM1079 580h1v1h-1zM1091 580h1v1h-1zM1102 580h1v1h-1zM1113 580h1v1h-1zM19 651h1v1h-1zM30 651h1v1h-1zM41 651h1v1h-1zM53 651h1v1h-1zM64 651h1v1h-1zM75 651h1v1h-1zM86 651h1v1h-1zM97 651h1v1h-1zM108 651h1v1h-1zM120 651h1v1h-1zM131 651h1v1h-1zM142 651h1v1h-1zM153 651h1v1h-1zM164 651h1v1h-1zM175 651h1v1h-1zM187 651h1v1h-1zM198 651h1v1h-1zM209 651h1v1h-1zM220 651h1v1h-1zM231 651h1v1h-1zM242 651h1v1h-1zM254 651h1v1h-1zM265 651h1v1h-1zM276 651h1v1h-1zM287 651h1v1h-1zM298 651h1v1h-1zM309 651h1v1h-1zM320 651h1v1h-1zM332 651h1v1h-1zM343 651h1v1h-1zM354 651h1v1h-1zM365 651h1v1h-1zM376 651h1v1h-1zM387 651h1v1h-1zM399 651h1v1h-1zM410 651h1v1h-1zM421 651h1v1h-1zM432 651h1v1h-1zM443 651h1v1h-1zM454 651h1v1h-1zM466 651h1v1h-1zM477 651h1v1h-1zM488 651h1v1h-1zM499 651h1v1h-1zM510 651h1v1h-1zM521 651h1v1h-1zM533 651h1v1h-1zM544 651h1v1h-1zM555 651h1v1h-1zM566 651h1v1h-1zM577 651h1v1h-1zM588 651h1v1h-1zM599 651h1v1h-1zM611 651h1v1h-1zM622 651h1v1h-1zM633 651h1v1h-1zM644 651h1v1h-1zM655 651h1v1h-1zM666 651h1v1h-1zM678 651h1v1h-1zM689 651h1v1h-1zM700 651h1v1h-1zM711 651h1v1h-1zM722 651h1v1h-1zM733 651h1v1h-1zM745 651h1v1h-1zM756 651h1v1h-1zM767 651h1v1h-1zM778 651h1v1h-1zM789 651h1v1h-1zM800 651h1v1h-1zM812 651h1v1h-1zM823 651h1v1h-1zM834 651h1v1h-1zM845 651h1v1h-1zM856 651h1v1h-1zM867 651h1v1h-1zM878 651h1v1h-1zM890 651h1v1h-1zM901 651h1v1h-1zM912 651h1v1h-1zM923 651h1v1h-1zM934 651h1v1h-1zM945 651h1v1h-1zM957 651h1v1h-1zM968 651h1v1h-1zM979 651h1v1h-1zM990 651h1v1h-1zM1001 651h1v1h-1zM1012 651h1v1h-1zM1024 651h1v1h-1zM1035 651h1v1h-1zM1046 651h1v1h-1zM1057 651h1v1h-1zM1068 651h1v1h-1zM1079 651h1v1h-1zM1091 651h1v1h-1zM1102 651h1v1h-1zM1113 651h1v1h-1zM19 722h1v1h-1zM30 722h1v1h-1zM41 722h1v1h-1zM53 722h1v1h-1zM64 722h1v1h-1zM75 722h1v1h-1zM86 722h1v1h-1zM97 722h1v1h-1zM108 722h1v1h-1zM120 722h1v1h-1zM131 722h1v1h-1zM142 722h1v1h-1zM153 722h1v1h-1zM164 722h1v1h-1zM175 722h1v1h-1zM187 722h1v1h-1zM198 722h1v1h-1zM209 722h1v1h-1zM220 722h1v1h-1zM231 722h1v1h-1zM242 722h1v1h-1zM254 722h1v1h-1zM265 722h1v1h-1zM276 722h1v1h-1zM287 722h1v1h-1zM298 722h1v1h-1zM309 722h1v1h-1zM320 722h1v1h-1zM332 722h1v1h-1zM343 722h1v1h-1zM354 722h1v1h-1zM365 722h1v1h-1zM376 722h1v1h-1zM387 722h1v1h-1zM399 722h1v1h-1zM410 722h1v1h-1zM421 722h1v1h-1zM432 722h1v1h-1zM443 722h1v1h-1zM454 722h1v1h-1zM466 722h1v1h-1zM477 722h1v1h-1zM488 722h1v1h-1zM499 722h1v1h-1zM510 722h1v1h-1zM521 722h1v1h-1zM533 722h1v1h-1zM544 722h1v1h-1zM555 722h1v1h-1zM566 722h1v1h-1zM577 722h1v1h-1zM588 722h1v1h-1zM599 722h1v1h-1zM611 722h1v1h-1zM622 722h1v1h-1zM633 722h1v1h-1zM644 722h1v1h-1zM655 722h1v1h-1zM666 722h1v1h-1zM678 722h1v1h-1zM689 722h1v1h-1zM700 722h1v1h-1zM711 722h1v1h-1zM722 722h1v1h-1zM733 722h1v1h-1zM745 722h1v1h-1zM756 722h1v1h-1zM767 722h1v1h-1zM778 722h1v1h-1zM789 722h1v1h-1zM800 722h1v1h-1zM812 722h1v1h-1zM823 722h1v1h-1zM834 722h1v1h-1zM845 722h1v1h-1zM856 722h1v1h-1zM867 722h1v1h-1zM878 722h1v1h-1zM890 722h1v1h-1zM901 722h1v1h-1zM912 722h1v1h-1zM923 722h1v1h-1zM934 722h1v1h-1zM945 722h1v1h-1zM957 722h1v1h-1zM968 722h1v1h-1zM979 722h1v1h-1zM990 722h1v1h-1zM1001 722h1v1h-1zM1012 722h1v1h-1zM1024 722h1v1h-1zM1035 722h1v1h-1zM1046 722h1v1h-1zM1057 722h1v1h-1zM1068 722h1v1h-1zM1079 722h1v1h-1zM1091 722h1v1h-1zM1102 722h1v1h-1zM1113 722h1v1h-1zM19 793h1v1h-1zM30 793h1v1h-1zM41 793h1v1h-1zM53 793h1v1h-1zM64 793h1v1h-1zM75 793h1v1h-1zM86 793h1v1h-1zM97 793h1v1h-1zM108 793h1v1h-1zM120 793h1v1h-1zM131 793h1v1h-1zM142 793h1v1h-1zM153 793h1v1h-1zM164 793h1v1h-1zM175 793h1v1h-1zM187 793h1v1h-1zM198 793h1v1h-1zM209 793h1v1h-1zM220 793h1v1h-1zM231 793h1v1h-1zM242 793h1v1h-1zM254 793h1v1h-1zM265 793h1v1h-1zM276 793h1v1h-1zM287 793h1v1h-1zM298 793h1v1h-1zM309 793h1v1h-1zM320 793h1v1h-1zM332 793h1v1h-1zM343 793h1v1h-1zM354 793h1v1h-1zM365 793h1v1h-1zM376 793h1v1h-1zM387 793h1v1h-1zM399 793h1v1h-1zM410 793h1v1h-1zM421 793h1v1h-1zM432 793h1v1h-1zM443 793h1v1h-1zM454 793h1v1h-1zM466 793h1v1h-1zM477 793h1v1h-1zM488 793h1v1h-1zM499 793h1v1h-1zM510 793h1v1h-1zM521 793h1v1h-1zM533 793h1v1h-1zM544 793h1v1h-1zM555 793h1v1h-1zM566 793h1v1h-1zM577 793h1v1h-1zM588 793h1v1h-1zM599 793h1v1h-1zM611 793h1v1h-1zM622 793h1v1h-1zM633 793h1v1h-1zM644 793h1v1h-1zM655 793h1v1h-1zM666 793h1v1h-1zM678 793h1v1h-1zM689 793h1v1h-1zM700 793h1v1h-1zM711 793h1v1h-1zM722 793h1v1h-1zM733 793h1v1h-1zM745 793h1v1h-1zM756 793h1v1h-1zM767 793h1v1h-1zM778 793h1v1h-1zM789 793h1v1h-1zM800 793h1v1h-1zM812 793h1v1h-1zM823 793h1v1h-1zM834 793h1v1h-1zM845 793h1v1h-1zM856 793h1v1h-1zM867 793h1v1h-1zM878 793h1v1h-1zM890 793h1v1h-1zM901 793h1v1h-1zM912 793h1v1h-1zM923 793h1v1h-1zM934 793h1v1h-1zM945 793h1v1h-1zM957 793h1v1h-1zM968 793h1v1h-1zM979 793h1v1h-1zM990 793h1v1h-1zM1001 793h1v1h-1zM1012 793h1v1h-1zM1024 793h1v1h-1zM1035 793h1v1h-1zM1046 793h1v1h-1zM1057 793h1v1h-1zM1068 793h1v1h-1zM1079 793h1v1h-1zM1091 793h1v1h-1zM1102 793h1v1h-1zM1113 793h1v1h-1zM19 864h1v1h-1zM30 864h1v1h-1zM41 864h1v1h-1zM53 864h1v1h-1zM64 864h1v1h-1zM75 864h1v1h-1zM86 864h1v1h-1zM97 864h1v1h-1zM108 864h1v1h-1zM120 864h1v1h-1zM131 864h1v1h-1zM142 864h1v1h-1zM153 864h1v1h-1zM164 864h1v1h-1zM175 864h1v1h-1zM187 864h1v1h-1zM198 864h1v1h-1zM209 864h1v1h-1zM220 864h1v1h-1zM231 864h1v1h-1zM242 864h1v1h-1zM254 864h1v1h-1zM265 864h1v1h-1zM276 864h1v1h-1zM287 864h1v1h-1zM298 864h1v1h-1zM309 864h1v1h-1zM320 864h1v1h-1zM332 864h1v1h-1zM343 864h1v1h-1zM354 864h1v1h-1zM365 864h1v1h-1zM376 864h1v1h-1zM387 864h1v1h-1zM399 864h1v1h-1zM410 864h1v1h-1zM421 864h1v1h-1zM432 864h1v1h-1zM443 864h1v1h-1zM454 864h1v1h-1zM466 864h1v1h-1zM477 864h1v1h-1zM488 864h1v1h-1zM499 864h1v1h-1zM510 864h1v1h-1zM521 864h1v1h-1zM533 864h1v1h-1zM544 864h1v1h-1zM555 864h1v1h-1zM566 864h1v1h-1zM577 864h1v1h-1zM588 864h1v1h-1zM599 864h1v1h-1zM611 864h1v1h-1zM622 864h1v1h-1zM633 864h1v1h-1zM644 864h1v1h-1zM655 864h1v1h-1zM666 864h1v1h-1zM678 864h1v1h-1zM689 864h1v1h-1zM700 864h1v1h-1zM711 864h1v1h-1zM722 864h1v1h-1zM733 864h1v1h-1zM745 864h1v1h-1zM756 864h1v1h-1zM767 864h1v1h-1zM778 864h1v1h-1zM789 864h1v1h-1zM800 864h1v1h-1zM812 864h1v1h-1zM823 864h1v1h-1zM834 864h1v1h-1zM845 864h1v1h-1zM856 864h1v1h-1zM867 864h1v1h-1zM878 864h1v1h-1zM890 864h1v1h-1zM901 864h1v1h-1zM912 864h1v1h-1zM923 864h1v1h-1zM934 864h1v1h-1zM945 864h1v1h-1zM957 864h1v1h-1zM968 864h1v1h-1zM979 864h1v1h-1zM990 864h1v1h-1zM1001 864h1v1h-1zM1012 864h1v1h-1zM1024 864h1v1h-1zM1035 864h1v1h-1zM1046 864h1v1h-1zM1057 864h1v1h-1zM1068 864h1v1h-1zM1079 864h1v1h-1zM1091 864h1v1h-1zM1102 864h1v1h-1zM1113 864h1v1h-1zM120 230h1v1h-1zM120 237h1v1h-1zM120 244h1v1h-1zM120 251h1v1h-1zM120 258h1v1h-1zM120 265h1v1h-1zM120 272h1v1h-1zM120 280h1v1h-1zM120 287h1v1h-1zM120 301h1v1h-1zM120 308h1v1h-1zM120 315h1v1h-1zM120 322h1v1h-1zM120 330h1v1h-1zM120 337h1v1h-1zM120 344h1v1h-1zM120 351h1v1h-1zM120 358h1v1h-1zM120 372h1v1h-1zM120 380h1v1h-1zM120 387h1v1h-1zM120 394h1v1h-1zM120 401h1v1h-1zM120 408h1v1h-1zM120 415h1v1h-1zM120 422h1v1h-1zM120 430h1v1h-1zM120 444h1v1h-1zM120 451h1v1h-1zM120 458h1v1h-1zM120 465h1v1h-1zM120 472h1v1h-1zM120 480h1v1h-1zM120 487h1v1h-1zM120 494h1v1h-1zM120 501h1v1h-1zM120 515h1v1h-1zM120 522h1v1h-1zM120 530h1v1h-1zM120 537h1v1h-1zM120 544h1v1h-1zM120 551h1v1h-1zM120 558h1v1h-1zM120 565h1v1h-1zM120 572h1v1h-1zM120 587h1v1h-1zM120 594h1v1h-1zM120 601h1v1h-1zM120 608h1v1h-1zM120 615h1v1h-1zM120 622h1v1h-1zM120 629h1v1h-1zM120 637h1v1h-1zM120 644h1v1h-1zM120 658h1v1h-1zM120 665h1v1h-1zM120 672h1v1h-1zM120 679h1v1h-1zM120 687h1v1h-1zM120 694h1v1h-1zM120 701h1v1h-1zM120 708h1v1h-1zM120 715h1v1h-1zM120 729h1v1h-1zM120 737h1v1h-1zM120 744h1v1h-1zM120 751h1v1h-1zM120 758h1v1h-1zM120 765h1v1h-1zM120 772h1v1h-1zM120 779h1v1h-1zM120 787h1v1h-1zM120 801h1v1h-1zM120 808h1v1h-1zM120 815h1v1h-1zM120 822h1v1h-1zM120 829h1v1h-1zM120 837h1v1h-1zM120 844h1v1h-1zM120 851h1v1h-1zM120 858h1v1h-1zM120 872h1v1h-1zM120 879h1v1h-1zM120 887h1v1h-1zM120 894h1v1h-1zM120 901h1v1h-1zM120 908h1v1h-1zM120 915h1v1h-1zM120 922h1v1h-1zM120 929h1v1h-1zM231 230h1v1h-1zM231 237h1v1h-1zM231 244h1v1h-1zM231 251h1v1h-1zM231 258h1v1h-1zM231 265h1v1h-1zM231 272h1v1h-1zM231 280h1v1h-1zM231 287h1v1h-1zM231 301h1v1h-1zM231 308h1v1h-1zM231 315h1v1h-1zM231 322h1v1h-1zM231 330h1v1h-1zM231 337h1v1h-1zM231 344h1v1h-1zM231 351h1v1h-1zM231 358h1v1h-1zM231 372h1v1h-1zM231 380h1v1h-1zM231 387h1v1h-1zM231 394h1v1h-1zM231 401h1v1h-1zM231 408h1v1h-1zM231 415h1v1h-1zM231 422h1v1h-1zM231 430h1v1h-1zM231 444h1v1h-1zM231 451h1v1h-1zM231 458h1v1h-1zM231 465h1v1h-1zM231 472h1v1h-1zM231 480h1v1h-1zM231 487h1v1h-1zM231 494h1v1h-1zM231 501h1v1h-1zM231 515h1v1h-1zM231 522h1v1h-1zM231 530h1v1h-1zM231 537h1v1h-1zM231 544h1v1h-1zM231 551h1v1h-1zM231 558h1v1h-1zM231 565h1v1h-1zM231 572h1v1h-1zM231 587h1v1h-1zM231 594h1v1h-1zM231 601h1v1h-1zM231 608h1v1h-1zM231 615h1v1h-1zM231 622h1v1h-1zM231 629h1v1h-1zM231 637h1v1h-1zM231 644h1v1h-1zM231 658h1v1h-1zM231 665h1v1h-1zM231 672h1v1h-1zM231 679h1v1h-1zM231 687h1v1h-1zM231 694h1v1h-1zM231 701h1v1h-1zM231 708h1v1h-1zM231 715h1v1h-1zM231 729h1v1h-1zM231 737h1v1h-1zM231 744h1v1h-1zM231 751h1v1h-1zM231 758h1v1h-1zM231 765h1v1h-1zM231 772h1v1h-1zM231 779h1v1h-1zM231 787h1v1h-1zM231 801h1v1h-1zM231 808h1v1h-1zM231 815h1v1h-1zM231 822h1v1h-1zM231 829h1v1h-1zM231 837h1v1h-1zM231 844h1v1h-1zM231 851h1v1h-1zM231 858h1v1h-1zM231 872h1v1h-1zM231 879h1v1h-1zM231 887h1v1h-1zM231 894h1v1h-1zM231 901h1v1h-1zM231 908h1v1h-1zM231 915h1v1h-1zM231 922h1v1h-1zM231 929h1v1h-1zM343 230h1v1h-1zM343 237h1v1h-1zM343 244h1v1h-1zM343 251h1v1h-1zM343 258h1v1h-1zM343 265h1v1h-1zM343 272h1v1h-1zM343 280h1v1h-1zM343 287h1v1h-1zM343 301h1v1h-1zM343 308h1v1h-1zM343 315h1v1h-1zM343 322h1v1h-1zM343 330h1v1h-1zM343 337h1v1h-1zM343 344h1v1h-1zM343 351h1v1h-1zM343 358h1v1h-1zM343 372h1v1h-1zM343 380h1v1h-1zM343 387h1v1h-1zM343 394h1v1h-1zM343 401h1v1h-1zM343 408h1v1h-1zM343 415h1v1h-1zM343 422h1v1h-1zM343 430h1v1h-1zM343 444h1v1h-1zM343 451h1v1h-1zM343 458h1v1h-1zM343 465h1v1h-1zM343 472h1v1h-1zM343 480h1v1h-1zM343 487h1v1h-1zM343 494h1v1h-1zM343 501h1v1h-1zM343 515h1v1h-1zM343 522h1v1h-1zM343 530h1v1h-1zM343 537h1v1h-1zM343 544h1v1h-1zM343 551h1v1h-1zM343 558h1v1h-1zM343 565h1v1h-1zM343 572h1v1h-1zM343 587h1v1h-1zM343 594h1v1h-1zM343 601h1v1h-1zM343 608h1v1h-1zM343 615h1v1h-1zM343 622h1v1h-1zM343 629h1v1h-1zM343 637h1v1h-1zM343 644h1v1h-1zM343 658h1v1h-1zM343 665h1v1h-1zM343 672h1v1h-1zM343 679h1v1h-1zM343 687h1v1h-1zM343 694h1v1h-1zM343 701h1v1h-1zM343 708h1v1h-1zM343 715h1v1h-1zM343 729h1v1h-1zM343 737h1v1h-1zM343 744h1v1h-1zM343 751h1v1h-1zM343 758h1v1h-1zM343 765h1v1h-1zM343 772h1v1h-1zM343 779h1v1h-1zM343 787h1v1h-1zM343 801h1v1h-1zM343 808h1v1h-1zM343 815h1v1h-1zM343 822h1v1h-1zM343 829h1v1h-1zM343 837h1v1h-1zM343 844h1v1h-1zM343 851h1v1h-1zM343 858h1v1h-1zM343 872h1v1h-1zM343 879h1v1h-1zM343 887h1v1h-1zM343 894h1v1h-1zM343 901h1v1h-1zM343 908h1v1h-1zM343 915h1v1h-1zM343 922h1v1h-1zM343 929h1v1h-1zM454 230h1v1h-1zM454 237h1v1h-1zM454 244h1v1h-1zM454 251h1v1h-1zM454 258h1v1h-1zM454 265h1v1h-1zM454 272h1v1h-1zM454 280h1v1h-1zM454 287h1v1h-1zM454 301h1v1h-1zM454 308h1v1h-1zM454 315h1v1h-1zM454 322h1v1h-1zM454 330h1v1h-1zM454 337h1v1h-1zM454 344h1v1h-1zM454 351h1v1h-1zM454 358h1v1h-1zM454 372h1v1h-1zM454 380h1v1h-1zM454 387h1v1h-1zM454 394h1v1h-1zM454 401h1v1h-1zM454 408h1v1h-1zM454 415h1v1h-1zM454 422h1v1h-1zM454 430h1v1h-1zM454 444h1v1h-1zM454 451h1v1h-1zM454 458h1v1h-1zM454 465h1v1h-1zM454 472h1v1h-1zM454 480h1v1h-1zM454 487h1v1h-1zM454 494h1v1h-1zM454 501h1v1h-1zM454 515h1v1h-1zM454 522h1v1h-1zM454 530h1v1h-1zM454 537h1v1h-1zM454 544h1v1h-1zM454 551h1v1h-1zM454 558h1v1h-1zM454 565h1v1h-1zM454 572h1v1h-1zM454 587h1v1h-1zM454 594h1v1h-1zM454 601h1v1h-1zM454 608h1v1h-1zM454 615h1v1h-1zM454 622h1v1h-1zM454 629h1v1h-1zM454 637h1v1h-1zM454 644h1v1h-1zM454 658h1v1h-1zM454 665h1v1h-1zM454 672h1v1h-1zM454 679h1v1h-1zM454 687h1v1h-1zM454 694h1v1h-1zM454 701h1v1h-1zM454 708h1v1h-1zM454 715h1v1h-1zM454 729h1v1h-1zM454 737h1v1h-1zM454 744h1v1h-1zM454 751h1v1h-1zM454 758h1v1h-1zM454 765h1v1h-1zM454 772h1v1h-1zM454 779h1v1h-1zM454 787h1v1h-1zM454 801h1v1h-1zM454 808h1v1h-1zM454 815h1v1h-1zM454 822h1v1h-1zM454 829h1v1h-1zM454 837h1v1h-1zM454 844h1v1h-1zM454 851h1v1h-1zM454 858h1v1h-1zM454 872h1v1h-1zM454 879h1v1h-1zM454 887h1v1h-1zM454 894h1v1h-1zM454 901h1v1h-1zM454 908h1v1h-1zM454 915h1v1h-1zM454 922h1v1h-1zM454 929h1v1h-1zM566 230h1v1h-1zM566 237h1v1h-1zM566 244h1v1h-1zM566 251h1v1h-1zM566 258h1v1h-1zM566 265h1v1h-1zM566 272h1v1h-1zM566 280h1v1h-1zM566 287h1v1h-1zM566 301h1v1h-1zM566 308h1v1h-1zM566 315h1v1h-1zM566 322h1v1h-1zM566 330h1v1h-1zM566 337h1v1h-1zM566 344h1v1h-1zM566 351h1v1h-1zM566 358h1v1h-1zM566 372h1v1h-1zM566 380h1v1h-1zM566 387h1v1h-1zM566 394h1v1h-1zM566 401h1v1h-1zM566 408h1v1h-1zM566 415h1v1h-1zM566 422h1v1h-1zM566 430h1v1h-1zM566 444h1v1h-1zM566 451h1v1h-1zM566 458h1v1h-1zM566 465h1v1h-1zM566 472h1v1h-1zM566 480h1v1h-1zM566 487h1v1h-1zM566 494h1v1h-1zM566 501h1v1h-1zM566 515h1v1h-1zM566 522h1v1h-1zM566 530h1v1h-1zM566 537h1v1h-1zM566 544h1v1h-1zM566 551h1v1h-1zM566 558h1v1h-1zM566 565h1v1h-1zM566 572h1v1h-1zM566 587h1v1h-1zM566 594h1v1h-1zM566 601h1v1h-1zM566 608h1v1h-1zM566 615h1v1h-1zM566 622h1v1h-1zM566 629h1v1h-1zM566 637h1v1h-1zM566 644h1v1h-1zM566 658h1v1h-1zM566 665h1v1h-1zM566 672h1v1h-1zM566 679h1v1h-1zM566 687h1v1h-1zM566 694h1v1h-1zM566 701h1v1h-1zM566 708h1v1h-1zM566 715h1v1h-1zM566 729h1v1h-1zM566 737h1v1h-1zM566 744h1v1h-1zM566 751h1v1h-1zM566 758h1v1h-1zM566 765h1v1h-1zM566 772h1v1h-1zM566 779h1v1h-1zM566 787h1v1h-1zM566 801h1v1h-1zM566 808h1v1h-1zM566 815h1v1h-1zM566 822h1v1h-1zM566 829h1v1h-1zM566 837h1v1h-1zM566 844h1v1h-1zM566 851h1v1h-1zM566 858h1v1h-1zM566 872h1v1h-1zM566 879h1v1h-1zM566 887h1v1h-1zM566 894h1v1h-1zM566 901h1v1h-1zM566 908h1v1h-1zM566 915h1v1h-1zM566 922h1v1h-1zM566 929h1v1h-1zM678 230h1v1h-1zM678 237h1v1h-1zM678 244h1v1h-1zM678 251h1v1h-1zM678 258h1v1h-1zM678 265h1v1h-1zM678 272h1v1h-1zM678 280h1v1h-1zM678 287h1v1h-1zM678 301h1v1h-1zM678 308h1v1h-1zM678 315h1v1h-1zM678 322h1v1h-1zM678 330h1v1h-1zM678 337h1v1h-1zM678 344h1v1h-1zM678 351h1v1h-1zM678 358h1v1h-1zM678 372h1v1h-1zM678 380h1v1h-1zM678 387h1v1h-1zM678 394h1v1h-1zM678 401h1v1h-1zM678 408h1v1h-1zM678 415h1v1h-1zM678 422h1v1h-1zM678 430h1v1h-1zM678 444h1v1h-1zM678 451h1v1h-1zM678 458h1v1h-1zM678 465h1v1h-1zM678 472h1v1h-1zM678 480h1v1h-1zM678 487h1v1h-1zM678 494h1v1h-1zM678 501h1v1h-1zM678 515h1v1h-1zM678 522h1v1h-1zM678 530h1v1h-1zM678 537h1v1h-1zM678 544h1v1h-1zM678 551h1v1h-1zM678 558h1v1h-1zM678 565h1v1h-1zM678 572h1v1h-1zM678 587h1v1h-1zM678 594h1v1h-1zM678 601h1v1h-1zM678 608h1v1h-1zM678 615h1v1h-1zM678 622h1v1h-1zM678 629h1v1h-1zM678 637h1v1h-1zM678 644h1v1h-1zM678 658h1v1h-1zM678 665h1v1h-1zM678 672h1v1h-1zM678 679h1v1h-1zM678 687h1v1h-1zM678 694h1v1h-1zM678 701h1v1h-1zM678 708h1v1h-1zM678 715h1v1h-1zM678 729h1v1h-1zM678 737h1v1h-1zM678 744h1v1h-1zM678 751h1v1h-1zM678 758h1v1h-1zM678 765h1v1h-1zM678 772h1v1h-1zM678 779h1v1h-1zM678 787h1v1h-1zM678 801h1v1h-1zM678 808h1v1h-1zM678 815h1v1h-1zM678 822h1v1h-1zM678 829h1v1h-1zM678 837h1v1h-1zM678 844h1v1h-1zM678 851h1v1h-1zM678 858h1v1h-1zM678 872h1v1h-1zM678 879h1v1h-1zM678 887h1v1h-1zM678 894h1v1h-1zM678 901h1v1h-1zM678 908h1v1h-1zM678 915h1v1h-1zM678 922h1v1h-1zM678 929h1v1h-1zM789 230h1v1h-1zM789 237h1v1h-1zM789 244h1v1h-1zM789 251h1v1h-1zM789 258h1v1h-1zM789 265h1v1h-1zM789 272h1v1h-1zM789 280h1v1h-1zM789 287h1v1h-1zM789 301h1v1h-1zM789 308h1v1h-1zM789 315h1v1h-1zM789 322h1v1h-1zM789 330h1v1h-1zM789 337h1v1h-1zM789 344h1v1h-1zM789 351h1v1h-1zM789 358h1v1h-1zM789 372h1v1h-1zM789 380h1v1h-1zM789 387h1v1h-1zM789 394h1v1h-1zM789 401h1v1h-1zM789 408h1v1h-1zM789 415h1v1h-1zM789 422h1v1h-1zM789 430h1v1h-1zM789 444h1v1h-1zM789 451h1v1h-1zM789 458h1v1h-1zM789 465h1v1h-1zM789 472h1v1h-1zM789 480h1v1h-1zM789 487h1v1h-1zM789 494h1v1h-1zM789 501h1v1h-1zM789 515h1v1h-1zM789 522h1v1h-1zM789 530h1v1h-1zM789 537h1v1h-1zM789 544h1v1h-1zM789 551h1v1h-1zM789 558h1v1h-1zM789 565h1v1h-1zM789 572h1v1h-1zM789 587h1v1h-1zM789 594h1v1h-1zM789 601h1v1h-1zM789 608h1v1h-1zM789 615h1v1h-1zM789 622h1v1h-1zM789 629h1v1h-1zM789 637h1v1h-1zM789 644h1v1h-1zM789 658h1v1h-1zM789 665h1v1h-1zM789 672h1v1h-1zM789 679h1v1h-1zM789 687h1v1h-1zM789 694h1v1h-1zM789 701h1v1h-1zM789 708h1v1h-1zM789 715h1v1h-1zM789 729h1v1h-1zM789 737h1v1h-1zM789 744h1v1h-1zM789 751h1v1h-1zM789 758h1v1h-1zM789 765h1v1h-1zM789 772h1v1h-1zM789 779h1v1h-1zM789 787h1v1h-1zM789 801h1v1h-1zM789 808h1v1h-1zM789 815h1v1h-1zM789 822h1v1h-1zM789 829h1v1h-1zM789 837h1v1h-1zM789 844h1v1h-1zM789 851h1v1h-1zM789 858h1v1h-1zM789 872h1v1h-1zM789 879h1v1h-1zM789 887h1v1h-1zM789 894h1v1h-1zM789 901h1v1h-1zM789 908h1v1h-1zM789 915h1v1h-1zM789 922h1v1h-1zM789 929h1v1h-1zM901 230h1v1h-1zM901 237h1v1h-1zM901 244h1v1h-1zM901 251h1v1h-1zM901 258h1v1h-1zM901 265h1v1h-1zM901 272h1v1h-1zM901 280h1v1h-1zM901 287h1v1h-1zM901 301h1v1h-1zM901 308h1v1h-1zM901 315h1v1h-1zM901 322h1v1h-1zM901 330h1v1h-1zM901 337h1v1h-1zM901 344h1v1h-1zM901 351h1v1h-1zM901 358h1v1h-1zM901 372h1v1h-1zM901 380h1v1h-1zM901 387h1v1h-1zM901 394h1v1h-1zM901 401h1v1h-1zM901 408h1v1h-1zM901 415h1v1h-1zM901 422h1v1h-1zM901 430h1v1h-1zM901 444h1v1h-1zM901 451h1v1h-1zM901 458h1v1h-1zM901 465h1v1h-1zM901 472h1v1h-1zM901 480h1v1h-1zM901 487h1v1h-1zM901 494h1v1h-1zM901 501h1v1h-1zM901 515h1v1h-1zM901 522h1v1h-1zM901 530h1v1h-1zM901 537h1v1h-1zM901 544h1v1h-1zM901 551h1v1h-1zM901 558h1v1h-1zM901 565h1v1h-1zM901 572h1v1h-1zM901 587h1v1h-1zM901 594h1v1h-1zM901 601h1v1h-1zM901 608h1v1h-1zM901 615h1v1h-1zM901 622h1v1h-1zM901 629h1v1h-1zM901 637h1v1h-1zM901 644h1v1h-1zM901 658h1v1h-1zM901 665h1v1h-1zM901 672h1v1h-1zM901 679h1v1h-1zM901 687h1v1h-1zM901 694h1v1h-1zM901 701h1v1h-1zM901 708h1v1h-1zM901 715h1v1h-1zM901 729h1v1h-1zM901 737h1v1h-1zM901 744h1v1h-1zM901 751h1v1h-1zM901 758h1v1h-1zM901 765h1v1h-1zM901 772h1v1h-1zM901 779h1v1h-1zM901 787h1v1h-1zM901 801h1v1h-1zM901 808h1v1h-1zM901 815h1v1h-1zM901 822h1v1h-1zM901 829h1v1h-1zM901 837h1v1h-1zM901 844h1v1h-1zM901 851h1v1h-1zM901 858h1v1h-1zM901 872h1v1h-1zM901 879h1v1h-1zM901 887h1v1h-1zM901 894h1v1h-1zM901 901h1v1h-1zM901 908h1v1h-1zM901 915h1v1h-1zM901 922h1v1h-1zM901 929h1v1h-1zM1012 230h1v1h-1zM1012 237h1v1h-1zM1012 244h1v1h-1zM1012 251h1v1h-1zM1012 258h1v1h-1zM1012 265h1v1h-1zM1012 272h1v1h-1zM1012 280h1v1h-1zM1012 287h1v1h-1zM1012 301h1v1h-1zM1012 308h1v1h-1zM1012 315h1v1h-1zM1012 322h1v1h-1zM1012 330h1v1h-1zM1012 337h1v1h-1zM1012 344h1v1h-1zM1012 351h1v1h-1zM1012 358h1v1h-1zM1012 372h1v1h-1zM1012 380h1v1h-1zM1012 387h1v1h-1zM1012 394h1v1h-1zM1012 401h1v1h-1zM1012 408h1v1h-1zM1012 415h1v1h-1zM1012 422h1v1h-1zM1012 430h1v1h-1zM1012 444h1v1h-1zM1012 451h1v1h-1zM1012 458h1v1h-1zM1012 465h1v1h-1zM1012 472h1v1h-1zM1012 480h1v1h-1zM1012 487h1v1h-1zM1012 494h1v1h-1zM1012 501h1v1h-1zM1012 515h1v1h-1zM1012 522h1v1h-1zM1012 530h1v1h-1zM1012 537h1v1h-1zM1012 544h1v1h-1zM1012 551h1v1h-1zM1012 558h1v1h-1zM1012 565h1v1h-1zM1012 572h1v1h-1zM1012 587h1v1h-1zM1012 594h1v1h-1zM1012 601h1v1h-1zM1012 608h1v1h-1zM1012 615h1v1h-1zM1012 622h1v1h-1zM1012 629h1v1h-1zM1012 637h1v1h-1zM1012 644h1v1h-1zM1012 658h1v1h-1zM1012 665h1v1h-1zM1012 672h1v1h-1zM1012 679h1v1h-1zM1012 687h1v1h-1zM1012 694h1v1h-1zM1012 701h1v1h-1zM1012 708h1v1h-1zM1012 715h1v1h-1zM1012 729h1v1h-1zM1012 737h1v1h-1zM1012 744h1v1h-1zM1012 751h1v1h-1zM1012 758h1v1h-1zM1012 765h1v1h-1zM1012 772h1v1h-1zM1012 779h1v1h-1zM1012 787h1v1h-1zM1012 801h1v1h-1zM1012 808h1v1h-1zM1012 815h1v1h-1zM1012 822h1v1h-1zM1012 829h1v1h-1zM1012 837h1v1h-1zM1012 844h1v1h-1zM1012 851h1v1h-1zM1012 858h1v1h-1zM1012 872h1v1h-1zM1012 879h1v1h-1zM1012 887h1v1h-1zM1012 894h1v1h-1zM1012 901h1v1h-1zM1012 908h1v1h-1zM1012 915h1v1h-1zM1012 922h1v1h-1zM1012 929h1v1h-1z" fill="#ececec"/>
<path d="M19 223h1v1h-1zM19 936h1v1h-1zM8 230h1v1h-1zM1125 230h1v1h-1zM30 223h1v1h-1zM30 936h1v1h-1zM8 237h1v1h-1zM1125 237h1v1h-1zM41 223h1v1h-1zM41 936h1v1h-1zM8 244h1v1h-1zM1125 244h1v1h-1zM53 223h1v1h-1zM53 936h1v1h-1zM8 251h1v1h-1zM1125 251h1v1h-1zM64 223h1v1h-1zM64 936h1v1h-1zM8 258h1v1h-1zM1125 258h1v1h-1zM75 223h1v1h-1zM75 936h1v1h-1zM8 265h1v1h-1zM1125 265h1v1h-1zM86 223h1v1h-1zM86 936h1v1h-1zM8 272h1v1h-1zM1125 272h1v1h-1zM97 223h1v1h-1zM97 936h1v1h-1zM8 280h1v1h-1zM1125 280h1v1h-1zM108 223h1v1h-1zM108 936h1v1h-1zM8 287h1v1h-1zM1125 287h1v1h-1zM120 223h1v1h-1zM120 936h1v1h-1zM8 294h1v1h-1zM1125 294h1v1h-1zM131 223h1v1h-1zM131 936h1v1h-1zM8 301h1v1h-1zM1125 301h1v1h-1zM142 223h1v1h-1zM142 936h1v1h-1zM8 308h1v1h-1zM1125 308h1v1h-1zM153 223h1v1h-1zM153 936h1v1h-1zM8 315h1v1h-1zM1125 315h1v1h-1zM164 223h1v1h-1zM164 936h1v1h-1zM8 322h1v1h-1zM1125 322h1v1h-1zM175 223h1v1h-1zM175 936h1v1h-1zM8 330h1v1h-1zM1125 330h1v1h-1zM187 223h1v1h-1zM187 936h1v1h-1zM8 337h1v1h-1zM1125 337h1v1h-1zM198 223h1v1h-1zM198 936h1v1h-1zM8 344h1v1h-1zM1125 344h1v1h-1zM209 223h1v1h-1zM209 936h1v1h-1zM8 351h1v1h-1zM1125 351h1v1h-1zM220 223h1v1h-1zM220 936h1v1h-1zM8 358h1v1h-1zM1125 358h1v1h-1zM231 223h1v1h-1zM231 936h1v1h-1zM8 365h1v1h-1zM1125 365h1v1h-1zM242 223h1v1h-1zM242 936h1v1h-1zM8 372h1v1h-1zM1125 372h1v1h-1zM254 223h1v1h-1zM254 936h1v1h-1zM8 380h1v1h-1zM1125 380h1v1h-1zM265 223h1v1h-1zM265 936h1v1h-1zM8 387h1v1h-1zM1125 387h1v1h-1zM276 223h1v1h-1zM276 936h1v1h-1zM8 394h1v1h-1zM1125 394h1v1h-1zM287 223h1v1h-1zM287 936h1v1h-1zM8 401h1v1h-1zM1125 401h1v1h-1zM298 223h1v1h-1zM298 936h1v1h-1zM8 408h1v1h-1zM1125 408h1v1h-1zM309 223h1v1h-1zM309 936h1v1h-1zM8 415h1v1h-1zM1125 415h1v1h-1zM320 223h1v1h-1zM320 936h1v1h-1zM8 422h1v1h-1zM1125 422h1v1h-1zM332 223h1v1h-1zM332 936h1v1h-1zM8 430h1v1h-1zM1125 430h1v1h-1zM343 223h1v1h-1zM343 936h1v1h-1zM8 437h1v1h-1zM1125 437h1v1h-1zM354 223h1v1h-1zM354 936h1v1h-1zM8 444h1v1h-1zM1125 444h1v1h-1zM365 223h1v1h-1zM365 936h1v1h-1zM8 451h1v1h-1zM1125 451h1v1h-1zM376 223h1v1h-1zM376 936h1v1h-1zM8 458h1v1h-1zM1125 458h1v1h-1zM387 223h1v1h-1zM387 936h1v1h-1zM8 465h1v1h-1zM1125 465h1v1h-1zM399 223h1v1h-1zM399 936h1v1h-1zM8 472h1v1h-1zM1125 472h1v1h-1zM410 223h1v1h-1zM410 936h1v1h-1zM8 480h1v1h-1zM1125 480h1v1h-1zM421 223h1v1h-1zM421 936h1v1h-1zM8 487h1v1h-1zM1125 487h1v1h-1zM432 223h1v1h-1zM432 936h1v1h-1zM8 494h1v1h-1zM1125 494h1v1h-1zM443 223h1v1h-1zM443 936h1v1h-1zM8 501h1v1h-1zM1125 501h1v1h-1zM454 223h1v1h-1zM454 936h1v1h-1zM8 508h1v1h-1zM1125 508h1v1h-1zM466 223h1v1h-1zM466 936h1v1h-1zM8 515h1v1h-1zM1125 515h1v1h-1zM477 223h1v1h-1zM477 936h1v1h-1zM8 522h1v1h-1zM1125 522h1v1h-1zM488 223h1v1h-1zM488 936h1v1h-1zM8 530h1v1h-1zM1125 530h1v1h-1zM499 223h1v1h-1zM499 936h1v1h-1zM8 537h1v1h-1zM1125 537h1v1h-1zM510 223h1v1h-1zM510 936h1v1h-1zM8 544h1v1h-1zM1125 544h1v1h-1zM521 223h1v1h-1zM521 936h1v1h-1zM8 551h1v1h-1zM1125 551h1v1h-1zM533 223h1v1h-1zM533 936h1v1h-1zM8 558h1v1h-1zM1125 558h1v1h-1zM544 223h1v1h-1zM544 936h1v1h-1zM8 565h1v1h-1zM1125 565h1v1h-1zM555 223h1v1h-1zM555 936h1v1h-1zM8 572h1v1h-1zM1125 572h1v1h-1zM566 223h1v1h-1zM566 936h1v1h-1zM8 580h1v1h-1zM1125 580h1v1h-1zM577 223h1v1h-1zM577 936h1v1h-1zM8 587h1v1h-1zM1125 587h1v1h-1zM588 223h1v1h-1zM588 936h1v1h-1zM8 594h1v1h-1zM1125 594h1v1h-1zM599 223h1v1h-1zM599 936h1v1h-1zM8 601h1v1h-1zM1125 601h1v1h-1zM611 223h1v1h-1zM611 936h1v1h-1zM8 608h1v1h-1zM1125 608h1v1h-1zM622 223h1v1h-1zM622 936h1v1h-1zM8 615h1v1h-1zM1125 615h1v1h-1zM633 223h1v1h-1zM633 936h1v1h-1zM8 622h1v1h-1zM1125 622h1v1h-1zM644 223h1v1h-1zM644 936h1v1h-1zM8 629h1v1h-1zM1125 629h1v1h-1zM655 223h1v1h-1zM655 936h1v1h-1zM8 637h1v1h-1zM1125 637h1v1h-1zM666 223h1v1h-1zM666 936h1v1h-1zM8 644h1v1h-1zM1125 644h1v1h-1zM678 223h1v1h-1zM678 936h1v1h-1zM8 651h1v1h-1zM1125 651h1v1h-1zM689 223h1v1h-1zM689 936h1v1h-1zM8 658h1v1h-1zM1125 658h1v1h-1zM700 223h1v1h-1zM700 936h1v1h-1zM8 665h1v1h-1zM1125 665h1v1h-1zM711 223h1v1h-1zM711 936h1v1h-1zM8 672h1v1h-1zM1125 672h1v1h-1zM722 223h1v1h-1zM722 936h1v1h-1zM8 679h1v1h-1zM1125 679h1v1h-1zM733 223h1v1h-1zM733 936h1v1h-1zM8 687h1v1h-1zM1125 687h1v1h-1zM745 223h1v1h-1zM745 936h1v1h-1zM8 694h1v1h-1zM1125 694h1v1h-1zM756 223h1v1h-1zM756 936h1v1h-1zM8 701h1v1h-1zM1125 701h1v1h-1zM767 223h1v1h-1zM767 936h1v1h-1zM8 708h1v1h-1zM1125 708h1v1h-1zM778 223h1v1h-1zM778 936h1v1h-1zM8 715h1v1h-1zM1125 715h1v1h-1zM789 223h1v1h-1zM789 936h1v1h-1zM8 722h1v1h-1zM1125 722h1v1h-1zM800 223h1v1h-1zM800 936h1v1h-1zM8 729h1v1h-1zM1125 729h1v1h-1zM812 223h1v1h-1zM812 936h1v1h-1zM8 737h1v1h-1zM1125 737h1v1h-1zM823 223h1v1h-1zM823 936h1v1h-1zM8 744h1v1h-1zM1125 744h1v1h-1zM834 223h1v1h-1zM834 936h1v1h-1zM8 751h1v1h-1zM1125 751h1v1h-1zM845 223h1v1h-1zM845 936h1v1h-1zM8 758h1v1h-1zM1125 758h1v1h-1zM856 223h1v1h-1zM856 936h1v1h-1zM8 765h1v1h-1zM1125 765h1v1h-1zM867 223h1v1h-1zM867 936h1v1h-1zM8 772h1v1h-1zM1125 772h1v1h-1zM878 223h1v1h-1zM878 936h1v1h-1zM8 779h1v1h-1zM1125 779h1v1h-1zM890 223h1v1h-1zM890 936h1v1h-1zM8 787h1v1h-1zM1125 787h1v1h-1zM901 223h1v1h-1zM901 936h1v1h-1zM8 794h1v1h-1zM1125 794h1v1h-1zM912 223h1v1h-1zM912 936h1v1h-1zM8 801h1v1h-1zM1125 801h1v1h-1zM923 223h1v1h-1zM923 936h1v1h-1zM8 808h1v1h-1zM1125 808h1v1h-1zM934 223h1v1h-1zM934 936h1v1h-1zM8 815h1v1h-1zM1125 815h1v1h-1zM945 223h1v1h-1zM945 936h1v1h-1zM8 822h1v1h-1zM1125 822h1v1h-1zM957 223h1v1h-1zM957 936h1v1h-1zM8 829h1v1h-1zM1125 829h1v1h-1zM968 223h1v1h-1zM968 936h1v1h-1zM8 837h1v1h-1zM1125 837h1v1h-1zM979 223h1v1h-1zM979 936h1v1h-1zM8 844h1v1h-1zM1125 844h1v1h-1zM990 223h1v1h-1zM990 936h1v1h-1zM8 851h1v1h-1zM1125 851h1v1h-1zM1001 223h1v1h-1zM1001 936h1v1h-1zM8 858h1v1h-1zM1125 858h1v1h-1zM1012 223h1v1h-1zM1012 936h1v1h-1zM8 865h1v1h-1zM1125 865h1v1h-1zM1024 223h1v1h-1zM1024 936h1v1h-1zM8 872h1v1h-1zM1125 872h1v1h-1zM1035 223h1v1h-1zM1035 936h1v1h-1zM8 879h1v1h-1zM1125 879h1v1h-1zM1046 223h1v1h-1zM1046 936h1v1h-1zM8 887h1v1h-1zM1125 887h1v1h-1zM1057 223h1v1h-1zM1057 936h1v1h-1zM8 894h1v1h-1zM1125 894h1v1h-1zM1068 223h1v1h-1zM1068 936h1v1h-1zM8 901h1v1h-1zM1125 901h1v1h-1zM1079 223h1v1h-1zM1079 936h1v1h-1zM8 908h1v1h-1zM1125 908h1v1h-1zM1091 223h1v1h-1zM1091 936h1v1h-1zM8 915h1v1h-1zM1125 915h1v1h-1zM1102 223h1v1h-1zM1102 936h1v1h-1zM8 922h1v1h-1zM1125 922h1v1h-1zM1113 223h1v1h-1zM1113 936h1v1h-1zM8 929h1v1h-1zM1125 929h1v1h-1z" fill="#e8e8e8"/>
<rect x="8" y="434" width="1118" height="3" fill="#f2f2f2" />
<rect x="8" y="807" width="1118" height="2" fill="#929292" />
<svg x="8" y="223" width="1118" height="714" viewBox="8 223 1118 714" overflow="hidden">
<path d="M407.5 223V936" stroke="#1cc2c6" stroke-width="3"/>
<path d="M8.0 520.0C8.2 516.5 8.7 506.3 9.5 499.2C10.3 492.1 11.4 484.2 12.6 477.1C13.8 470.0 15.3 462.4 16.6 456.6C17.9 450.8 19.2 445.9 20.5 442.4C21.8 438.9 23.8 436.6 24.5 435.5M119.2 435.5C120.1 436.6 123.0 438.9 124.7 442.4C126.4 445.9 127.9 451.3 129.5 456.6C131.1 461.9 132.8 467.9 134.2 474.0C135.6 480.1 137.1 487.1 138.2 492.9C139.2 498.7 139.6 503.2 140.5 508.7C141.4 514.2 142.5 520.0 143.7 526.0C144.9 532.0 146.1 538.9 147.6 545.0C149.1 551.1 150.8 557.8 152.4 562.4C154.0 567.0 155.3 570.5 157.1 572.6C158.9 574.8 161.4 575.4 163.4 575.3C165.4 575.2 167.4 574.0 169.0 571.9C170.6 569.8 171.7 566.6 172.9 562.4C174.1 558.2 175.1 552.4 176.1 546.6C177.1 540.8 178.0 534.7 179.2 527.6C180.4 520.5 181.8 512.7 183.2 504.0C184.6 495.3 186.3 484.2 187.9 475.5C189.5 466.8 191.2 457.9 192.6 451.8C194.0 445.8 195.5 441.9 196.6 439.2C197.7 436.5 198.9 436.1 199.3 435.5M288.8 435.5C289.7 437.4 292.2 440.8 294.1 446.9C296.0 453.0 298.2 463.6 300.3 471.9C302.4 480.2 304.8 488.0 306.6 496.9C308.4 505.8 309.8 516.1 311.3 525.0C312.9 533.9 313.8 540.1 315.9 550.0C318.0 559.9 321.4 575.3 323.8 584.4C326.2 593.5 328.2 600.8 330.0 604.7C331.8 608.6 332.9 605.4 334.7 607.8C336.5 610.1 339.1 612.8 340.9 618.8C342.7 624.8 344.0 634.4 345.6 643.8C347.2 653.2 348.5 663.5 350.3 675.0C352.1 686.5 354.5 701.8 356.6 712.5C358.7 723.2 361.0 733.3 362.8 739.0C364.6 744.7 365.9 746.1 367.5 746.9C369.1 747.7 370.4 747.4 372.2 743.8C374.0 740.1 376.0 738.0 378.4 725.0C380.8 712.0 383.9 685.4 386.3 665.6C388.7 645.8 390.2 625.6 392.5 606.3C394.8 587.0 398.2 565.7 400.3 550.0C402.4 534.3 404.2 518.3 405.0 512.0M410.0 435.5C411.1 437.6 414.2 442.5 416.6 448.0C419.0 453.5 422.6 462.4 424.3 468.4C426.0 474.4 425.5 477.0 426.8 483.8C428.1 490.6 430.0 498.7 431.9 509.3C433.8 519.9 436.2 533.6 438.3 547.6C440.4 561.6 442.8 579.1 444.7 593.6C446.6 608.1 448.1 623.6 449.8 634.5C451.5 645.4 452.8 651.1 454.9 658.8C457.0 666.5 460.5 676.2 462.6 680.5C464.7 684.8 465.6 684.5 467.7 684.3C469.8 684.1 473.0 680.9 475.4 679.2C477.8 677.5 479.7 680.3 481.8 674.1C483.9 667.9 485.8 655.6 488.1 642.2C490.4 628.8 493.5 608.5 495.8 593.6C498.1 578.7 500.3 566.8 502.2 552.7C504.1 538.7 505.4 522.1 507.3 509.3C509.2 496.5 511.8 486.3 513.7 476.1C515.6 465.9 517.1 454.8 518.8 448.0C520.5 441.2 523.0 437.6 523.9 435.5M558.6 435.5C559.4 436.8 561.8 438.9 563.6 443.2C565.4 447.5 567.6 455.0 569.3 461.4C571.0 467.8 572.4 474.6 573.9 481.8C575.4 489.0 577.1 496.2 578.4 504.5C579.7 512.8 580.5 522.3 581.8 531.8C583.1 541.3 584.7 550.4 586.4 561.4C588.1 572.4 590.3 587.5 592.0 597.7C593.7 607.9 594.9 615.1 596.6 622.7C598.3 630.3 599.8 637.9 602.3 643.2C604.8 648.5 608.4 653.4 611.4 654.5C614.4 655.6 618.0 653.0 620.5 650.0C623.0 647.0 624.2 643.6 626.1 636.4C628.0 629.2 630.3 616.3 631.8 606.8C633.3 597.3 633.9 590.9 635.2 579.5C636.5 568.1 638.3 551.9 639.8 538.6C641.3 525.4 642.6 512.5 644.3 500.0C646.0 487.5 648.3 473.1 650.0 463.6C651.7 454.1 653.2 447.9 654.5 443.2C655.8 438.5 657.4 436.8 658.0 435.5M684.5 435.5C685.3 436.5 687.7 439.1 689.1 441.6C690.5 444.1 691.5 445.9 692.9 450.7C694.3 455.5 696.1 464.6 697.4 470.4C698.6 476.2 699.3 479.7 700.4 485.5C701.5 491.3 702.9 498.9 704.2 505.2C705.5 511.5 706.8 516.7 708.0 523.3C709.2 529.9 710.1 538.7 711.4 545.0C712.7 551.3 714.1 557.2 715.6 561.2C717.1 565.2 718.4 566.8 720.1 568.7C721.9 570.6 724.1 572.2 726.1 572.5C728.1 572.8 730.3 571.8 732.2 570.2C734.1 568.6 735.9 566.7 737.5 562.7C739.1 558.7 740.5 552.6 742.0 546.0C743.5 539.4 745.3 530.9 746.6 523.3C747.9 515.7 748.9 506.4 749.6 500.6C750.4 494.8 750.4 493.5 751.1 488.5C751.9 483.5 753.0 476.4 754.1 470.4C755.2 464.3 756.5 457.2 757.9 452.2C759.3 447.1 761.1 442.9 762.5 440.1C763.9 437.3 765.6 436.3 766.2 435.5M827.2 435.5C828.0 436.1 830.4 436.6 831.7 439.4C833.1 442.1 834.1 447.8 835.3 452.0C836.5 456.2 837.7 460.4 838.9 464.6C840.1 468.8 841.3 472.4 842.5 477.2C843.7 482.0 845.3 488.8 846.1 493.3C846.9 497.8 846.9 498.6 847.5 504.0C848.1 509.4 848.6 518.5 849.7 525.7C850.8 532.9 852.7 540.4 854.2 547.3C855.7 554.2 857.2 561.1 858.7 567.1C860.2 573.1 862.0 579.1 863.2 583.3C864.4 587.5 864.7 589.9 865.9 592.3C867.1 594.7 869.2 596.7 870.4 597.7C871.6 598.8 872.0 598.0 873.1 598.6C874.2 599.2 875.5 600.4 876.7 601.3C877.9 602.2 879.1 604.1 880.3 604.0C881.5 603.9 882.5 603.9 883.8 600.4C885.1 596.9 886.8 589.8 888.3 583.3C889.8 576.8 891.3 569.5 892.8 561.7C894.3 553.9 895.9 544.9 897.3 536.5C898.6 528.1 900.0 518.5 900.9 511.3C901.8 504.1 901.8 499.9 902.7 493.3C903.6 486.7 905.1 478.1 906.3 471.8C907.5 465.5 908.7 460.7 909.9 455.6C911.1 450.5 912.3 444.6 913.5 441.2C914.7 437.8 916.5 436.4 917.1 435.5M949.8 435.5C950.6 436.5 953.0 439.1 954.4 441.6C955.8 444.1 957.2 447.4 958.2 450.7C959.2 454.0 959.5 457.3 960.4 461.3C961.3 465.3 962.4 470.1 963.4 474.9C964.4 479.7 965.5 484.7 966.5 490.0C967.5 495.3 968.5 501.1 969.5 506.7C970.5 512.2 971.4 517.8 972.5 523.3C973.6 528.8 975.0 534.5 976.3 540.0C977.6 545.5 979.0 552.6 980.1 556.6C981.2 560.6 981.7 561.9 983.1 564.2C984.5 566.5 986.6 569.2 988.4 570.2C990.2 571.2 992.1 570.7 993.7 570.2C995.3 569.7 996.7 568.5 998.2 567.2C999.7 566.0 1001.4 565.0 1002.8 562.7C1004.2 560.4 1005.4 557.9 1006.6 553.6C1007.9 549.3 1009.0 543.5 1010.3 537.0C1011.5 530.5 1013.1 521.1 1014.1 514.3C1015.1 507.5 1015.6 501.9 1016.4 496.1C1017.2 490.3 1017.8 485.3 1018.7 479.5C1019.6 473.7 1020.6 466.6 1021.7 461.3C1022.8 456.0 1024.2 451.5 1025.5 447.7C1026.8 443.9 1028.3 440.6 1029.3 438.6C1030.3 436.6 1031.1 436.0 1031.5 435.5M1099.1 435.5C1099.8 436.6 1101.8 439.5 1103.1 442.2C1104.4 444.9 1105.8 447.8 1107.1 451.5C1108.4 455.2 1109.9 460.3 1111.1 464.7C1112.3 469.1 1113.4 472.9 1114.4 478.0C1115.4 483.1 1116.0 489.0 1117.0 495.2C1118.0 501.4 1119.1 508.0 1120.3 515.1C1121.5 522.2 1123.0 533.0 1124.3 537.6C1125.6 542.2 1127.4 542.1 1128.0 543.0M24.5 435.5H119.2M199.3 435.5H288.8M523.9 435.5H558.6M658 435.5H684.5M766.2 435.5H827.2M917.1 435.5H949.8M1031.5 435.5H1099.1M405 512V223M409.8 223V436" fill="none" stroke="#f4c8c8" stroke-width="2.5" stroke-linecap="round" stroke-linejoin="round"/>
<polyline points="8,720.1 10.4,719.2 17,750.4 22.7,780.7 27.4,807.5 117.3,807.5 119.2,816.6 141,881 157,818.5 165.6,805.3 174.1,767.4 182.6,723 191.1,756.1 195.8,776.9 201.5,807.5 284.9,807.5 289.9,823.2 309.7,878.8 322.7,851 332.6,810.3 338.5,839.1 350.5,896.7 368.4,803.3 386.2,712.9 405.1,712.9 405.1,719.9" fill="none" stroke="#1cc2c6" stroke-width="2.6" stroke-linejoin="miter" stroke-miterlimit="4"/>
<polyline points="407.5,808 410.7,817.2 423.9,856.9 434.3,889 443.8,889 449.4,866.4 463.6,819.1 473.1,796.4 477.8,807.8 482.5,783.2 496.7,718.9 507.1,718.9 520.3,777.5 526,807.8 556.6,807.8 559.5,817.3 567,836.2 578.4,875.9 582.5,888.2 596.3,855.1 606.7,826.7 614.3,800.2 616.2,813.5 618.1,796.5 636.1,713.2 642.7,713.2 654,770 661.6,807.8 682.4,807.8 693.8,843.7 704.2,877.8 712.7,849.4 721.2,821 728.8,800.2 730.7,813.5 732.6,798.4 750.5,720.8 751,718.5 767.5,807.8 826.2,807.8 827.1,815.4 844.2,864.6 848,881.6 864,840 872.6,809.7 876.3,822.9 884.9,781.3 898.1,716.1 900.9,716.1 918.9,807.8 946.3,807.8 960.5,849.4 970,877.8 980.7,838.2 985.4,821.1 991.1,807.9 995.8,798.4 998.7,805 1015.7,726.5 1018.5,732.2 1033.7,807.8 1096.1,807.8 1114.1,859 1120.7,878.8 1125.5,870.3 1128,866" fill="none" stroke="#1cc2c6" stroke-width="2.6" stroke-linejoin="miter" stroke-miterlimit="4"/>
<rect x="406" y="223" width="3" height="213" fill="#cfe6e6"/>
<circle cx="847.3" cy="504" r="5.6" fill="#f4c8c8"/>
</svg>
<text x="15" y="542.6" font-size="17.3" fill="#dcb8b8" stroke="#dcb8b8" stroke-width="0.35" text-anchor="start" font-weight="normal" font-family='"Liberation Sans", sans-serif' >joint.0.vel-cmd</text>
<text x="15" y="566" font-size="17.3" fill="#dcb8b8" stroke="#dcb8b8" stroke-width="0.35" text-anchor="start" font-weight="normal" font-family='"Liberation Sans", sans-serif' >5 /div</text>
<text x="14.5" y="751.4" font-size="17" fill="#1fb8bc" stroke="#1fb8bc" stroke-width="0.35" text-anchor="start" font-weight="normal" font-family='"Liberation Sans", sans-serif' >joint.0.acc-cmd</text>
<text x="14.5" y="775" font-size="17" fill="#1fb8bc" stroke="#1fb8bc" stroke-width="0.35" text-anchor="start" font-weight="normal" font-family='"Liberation Sans", sans-serif' >500 /div</text>
</svg></body></html>
